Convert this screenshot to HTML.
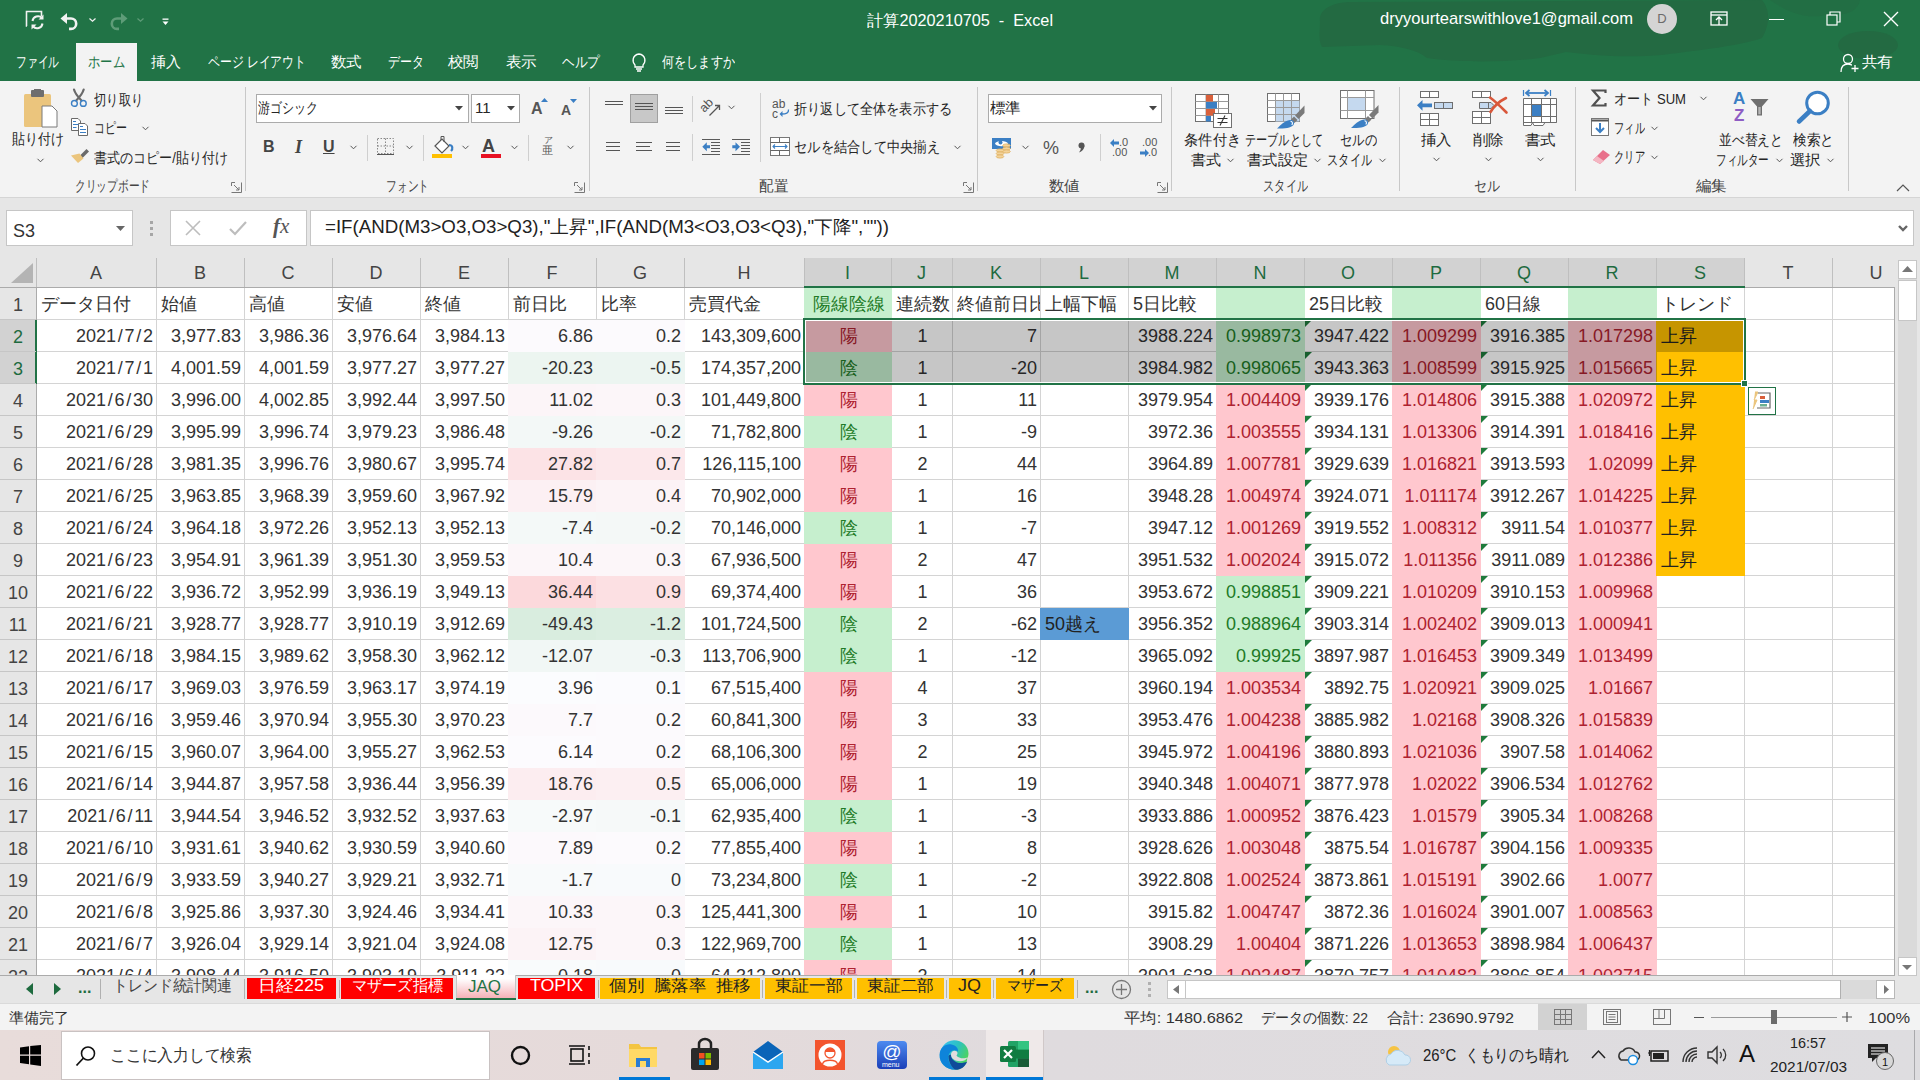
<!DOCTYPE html><html><head><meta charset="utf-8"><title>Excel</title><style>
*{box-sizing:border-box}
html,body{margin:0;padding:0}
body{width:1920px;height:1080px;overflow:hidden;position:relative;font-family:"Liberation Sans",sans-serif;background:#fff;color:#000}
.ab{position:absolute}
.t{position:absolute;white-space:nowrap;line-height:1}
.c{position:absolute;white-space:nowrap;overflow:hidden;font-size:18px;line-height:32px;height:31px;padding:0 3px 0 4px}
.sl{margin:0 1.75px}
.r{text-align:right}
.ce{text-align:center}
.gl{position:absolute;background:#D4D4D4}
svg{position:absolute;overflow:visible}
</style></head><body>

<div class="ab" style="left:0;top:0;width:1920px;height:81px;background:#217346;overflow:hidden">
<svg style="left:0;top:0" width="1920" height="81"><g fill="#236A42"><path d="M1320 22 C1318 8 1335 2 1352 2 L1762 0 C1772 12 1768 28 1762 38 C1740 46 1700 50 1662 55 C1625 58 1590 55 1566 52 L1540 58 C1500 63 1455 62 1427 58 C1418 50 1400 46 1380 45 L1322 47 C1318 40 1320 30 1320 22 Z"/><path d="M1770 0 L1860 0 C1858 12 1845 16 1830 14 C1810 20 1790 14 1770 0Z" opacity="0.6"/><ellipse cx="1868" cy="45" rx="30" ry="14"/></g></svg>
<svg style="left:25px;top:10px" width="22" height="20"><g fill="none" stroke="#F2F2F2" stroke-width="1.6"><path d="M2 16 H1.5 V1.5 H16.5 V6"/></g><g fill="none" stroke="#F2F2F2" stroke-width="2"><path d="M7.5 11 a5.5 5.5 0 0 1 9.5 -3"/><path d="M17.5 13.5 a5.5 5.5 0 0 1 -9.5 3"/></g><path d="M18.5 4.5 V9.5 H13.5Z M6.5 19.5 V14.5 H11.5Z" fill="#F2F2F2"/></svg>
<svg style="left:60px;top:12px" width="20" height="18"><g fill="none" stroke="#F2F2F2" stroke-width="2.6"><path d="M3 6.5 H11 a5.2 5.2 0 0 1 0 10.4 H9"/></g><path d="M0.5 6.5 L7 1 V12Z" fill="#F2F2F2"/></svg>
<svg style="left:89px;top:18px" width="7" height="4"><path d="M0.5 0.5 L3.5 3.3 L6.5 0.5" fill="none" stroke="#F2F2F2" stroke-width="1.2"/></svg>
<svg style="left:108px;top:12px" width="20" height="18"><g fill="none" stroke="#5E9C78" stroke-width="2.6"><path d="M17 6.5 H9 a5.2 5.2 0 0 0 0 10.4 H11"/></g><path d="M19.5 6.5 L13 1 V12Z" fill="#5E9C78"/></svg>
<svg style="left:137px;top:18px" width="7" height="4"><path d="M0.5 0.5 L3.5 3.3 L6.5 0.5" fill="none" stroke="#5E9C78" stroke-width="1.2"/></svg>
<svg style="left:162px;top:18px" width="7" height="8"><rect x="0.5" y="0.5" width="6" height="1.3" fill="#fff"/><path d="M0.5 3.5 H6.5 L3.5 7 Z" fill="#fff"/></svg>
<div class="t" id="f0" style="left:867px;top:13px;color:#fff;font-size:16px;transform:scaleX(1.0152);transform-origin:0 0;">計算2020210705&nbsp; -&nbsp; Excel</div>
<div class="t" id="f1" style="left:1380px;top:10px;color:#fff;font-size:17px;transform:scaleX(0.9728);transform-origin:0 0;">dryyourtearswithlove1@gmail.com</div>
<div class="ab" style="left:1647px;top:4px;width:30px;height:30px;border-radius:50%;background:#D4D4D4;color:#6b6b6b;font-size:13px;line-height:30px;text-align:center">D</div>
<svg style="left:1710px;top:11px" width="18" height="16"><g fill="none" stroke="#fff" stroke-width="1.3"><rect x="1" y="1" width="16" height="13"/><path d="M1 4 H17"/><path d="M9 14 V6 M6 9 L9 6 L12 9"/></g></svg>
<div class="ab" style="left:1769px;top:19px;width:15px;height:1px;background:#fff"></div>
<svg style="left:1826px;top:11px" width="16" height="16"><g fill="none" stroke="#fff" stroke-width="1.2"><rect x="1" y="4" width="10" height="10"/><path d="M4 4 V1 H14 V11 H11"/></g></svg>
<svg style="left:1883px;top:11px" width="16" height="16"><g stroke="#fff" stroke-width="1.4"><path d="M1 1 L15 15 M15 1 L1 15"/></g></svg>
<div class="ab" style="left:76px;top:43px;width:61px;height:38px;background:#F3F3F3"></div>
<div class="t" id="f2" style="left:16px;top:54px;color:#fff;font-size:15px;transform:scaleX(0.7167);transform-origin:0 0;">ファイル</div>
<div class="t" id="f3" style="left:88px;top:54px;color:#217346;font-size:15px;transform:scaleX(0.8222);transform-origin:0 0;">ホーム</div>
<div class="t" id="f4" style="left:151px;top:54px;color:#fff;font-size:15px;transform:scaleX(1.0000);transform-origin:0 0;">挿入</div>
<div class="t" id="f5" style="left:208px;top:54px;color:#fff;font-size:15px;transform:scaleX(0.7892);transform-origin:0 0;">ページ レイアウト</div>
<div class="t" id="f6" style="left:331px;top:54px;color:#fff;font-size:15px;transform:scaleX(1.0333);transform-origin:0 0;">数式</div>
<div class="t" id="f7" style="left:388px;top:54px;color:#fff;font-size:15px;transform:scaleX(0.8000);transform-origin:0 0;">データ</div>
<div class="t" id="f8" style="left:448px;top:54px;color:#fff;font-size:15px;transform:scaleX(1.0333);transform-origin:0 0;">校閲</div>
<div class="t" id="f9" style="left:506px;top:54px;color:#fff;font-size:15px;transform:scaleX(1.0333);transform-origin:0 0;">表示</div>
<div class="t" id="f10" style="left:562px;top:54px;color:#fff;font-size:15px;transform:scaleX(0.8444);transform-origin:0 0;">ヘルプ</div>
<div class="t" id="f11" style="left:662px;top:54px;color:#fff;font-size:15px;transform:scaleX(0.8111);transform-origin:0 0;">何をしますか</div>
<svg style="left:631px;top:52px" width="16" height="20"><g fill="none" stroke="#fff" stroke-width="1.3"><path d="M4 13 C1 10 1 3 8 2 C15 3 15 10 12 13 V15 H4 Z"/><path d="M5 17 H11 M6 19 H10"/></g></svg>
<svg style="left:1840px;top:53px" width="20" height="20"><g fill="none" stroke="#fff" stroke-width="1.3"><circle cx="8" cy="6" r="4.5"/><path d="M1 19 C1 13 4 11 8 11 C10 11 11 12 12 12"/><path d="M15 12 V19 M11.5 15.5 H18.5"/></g></svg>
<div class="t" id="f12" style="left:1862px;top:54px;color:#fff;font-size:15px;transform:scaleX(1.0333);transform-origin:0 0;">共有</div>
</div>
<div class="ab" style="left:0;top:81px;width:1920px;height:117px;background:#F3F3F3;border-bottom:1px solid #D5D5D5"></div>
<div class="ab" style="left:245px;top:87px;width:1px;height:104px;background:#C8C8C8"></div>
<div class="ab" style="left:589px;top:87px;width:1px;height:104px;background:#C8C8C8"></div>
<div class="ab" style="left:977px;top:87px;width:1px;height:104px;background:#C8C8C8"></div>
<div class="ab" style="left:1171px;top:87px;width:1px;height:104px;background:#C8C8C8"></div>
<div class="ab" style="left:1399px;top:87px;width:1px;height:104px;background:#C8C8C8"></div>
<div class="ab" style="left:1575px;top:87px;width:1px;height:104px;background:#C8C8C8"></div>
<div class="ab" style="left:1848px;top:87px;width:1px;height:104px;background:#C8C8C8"></div>
<div class="t" id="f13" style="left:75px;top:178px;color:#444;font-size:15px;transform:scaleX(0.7143);transform-origin:0 0;">クリップボード</div>
<div class="t" id="f14" style="left:386px;top:178px;color:#444;font-size:15px;transform:scaleX(0.7167);transform-origin:0 0;">フォント</div>
<div class="t" id="f15" style="left:759px;top:178px;color:#444;font-size:15px;transform:scaleX(0.9667);transform-origin:0 0;">配置</div>
<div class="t" id="f16" style="left:1049px;top:178px;color:#444;font-size:15px;transform:scaleX(1.0333);transform-origin:0 0;">数値</div>
<div class="t" id="f17" style="left:1263px;top:178px;color:#444;font-size:15px;transform:scaleX(0.7500);transform-origin:0 0;">スタイル</div>
<div class="t" id="f18" style="left:1474px;top:178px;color:#444;font-size:15px;transform:scaleX(0.8667);transform-origin:0 0;">セル</div>
<div class="t" id="f19" style="left:1696px;top:178px;color:#444;font-size:15px;transform:scaleX(1.0333);transform-origin:0 0;">編集</div>
<svg style="left:231px;top:182px" width="11" height="11"><g fill="none" stroke="#777" stroke-width="1"><path d="M0.5 4 V0.5 H4"/><path d="M0.5 10.5 H10.5 V0.5"/><path d="M3 3 L8 8 M5 8 H8 V5"/></g></svg>
<svg style="left:574px;top:182px" width="11" height="11"><g fill="none" stroke="#777" stroke-width="1"><path d="M0.5 4 V0.5 H4"/><path d="M0.5 10.5 H10.5 V0.5"/><path d="M3 3 L8 8 M5 8 H8 V5"/></g></svg>
<svg style="left:963px;top:182px" width="11" height="11"><g fill="none" stroke="#777" stroke-width="1"><path d="M0.5 4 V0.5 H4"/><path d="M0.5 10.5 H10.5 V0.5"/><path d="M3 3 L8 8 M5 8 H8 V5"/></g></svg>
<svg style="left:1157px;top:182px" width="11" height="11"><g fill="none" stroke="#777" stroke-width="1"><path d="M0.5 4 V0.5 H4"/><path d="M0.5 10.5 H10.5 V0.5"/><path d="M3 3 L8 8 M5 8 H8 V5"/></g></svg>
<svg style="left:1896px;top:184px" width="14" height="8"><path d="M1 7 L7 1 L13 7" fill="none" stroke="#555" stroke-width="1.2"/></svg>

<svg style="left:23px;top:89px" width="36" height="40"><rect x="1" y="5" width="27" height="33" rx="1.5" fill="#EBC57D"/><rect x="8" y="1" width="13" height="7" rx="1" fill="#6E6E6E"/><rect x="11" y="0" width="7" height="3" fill="#6E6E6E"/><path d="M19 17 H29 L34 22 V38 H19 Z" fill="#fff" stroke="#7A7A7A" stroke-width="1"/></svg>
<div class="t" id="f20" style="left:12px;top:131px;color:#262626;font-size:15px;transform:scaleX(0.8667);transform-origin:0 0;">貼り付け</div>
<svg style="left:36.5px;top:158px" width="7" height="5"><path d="M0.5 0.8 L3.5 3.8 L6.5 0.8" fill="none" stroke="#555" stroke-width="1"/></svg>
<svg style="left:70px;top:88px" width="20" height="20"><g fill="none" stroke="#6A6A6A" stroke-width="2.2" stroke-linecap="round"><path d="M4 1.5 C5 5 7 8 11.5 12.5"/><path d="M13.7 1.5 C12.7 5 10.7 8 6.2 12.5"/></g><g fill="none" stroke="#3B7FC4" stroke-width="1.4"><circle cx="4.4" cy="15.4" r="2.9"/><circle cx="13.3" cy="15.4" r="2.9"/></g></svg>
<div class="t" id="f21" style="left:94px;top:92px;color:#262626;font-size:15px;transform:scaleX(0.8167);transform-origin:0 0;">切り取り</div>
<svg style="left:70px;top:117px" width="20" height="20"><g fill="#fff" stroke="#6A6A6A" stroke-width="1"><path d="M1.5 1.5 H8 L10.5 4 V13.5 H1.5 Z"/><path d="M8.5 6.5 H15 L17.5 9 V18.5 H8.5 Z"/></g><g stroke="#3B7FC4" stroke-width="1"><path d="M3 4.5 H6 M3 7.5 H8.5 M3 10.5 H6.5 M10 9.5 H13 M10 12.5 H16 M10 15.5 H16"/></g></svg>
<div class="t" id="f22" style="left:94px;top:120px;color:#262626;font-size:15px;transform:scaleX(0.7333);transform-origin:0 0;">コピー</div>
<svg style="left:141.5px;top:126px" width="7" height="5"><path d="M0.5 0.8 L3.5 3.8 L6.5 0.8" fill="none" stroke="#555" stroke-width="1"/></svg>
<svg style="left:70px;top:148px" width="20" height="18"><path d="M16.5 1 L19 3.5 L11.5 11 L9 8.5 Z" fill="#6A6A6A"/><path d="M1 7.5 L9.5 5.5 L13.5 10.5 L8 15 Z" fill="#EBC57D"/></svg>
<div class="t" id="f23" style="left:94px;top:150px;color:#262626;font-size:15px;transform:scaleX(0.8692);transform-origin:0 0;">書式のコピー/貼り付け</div>
<div class="ab" style="left:256px;top:94px;width:213px;height:29px;background:#fff;border:1px solid #ABABAB"></div>
<div class="t" id="f24" style="left:258px;top:100px;color:#262626;font-size:15px;transform:scaleX(0.8000);transform-origin:0 0;">游ゴシック</div>
<svg style="left:455px;top:106px" width="8" height="5"><path d="M0 0 H8 L4 4.5Z" fill="#444"/></svg>
<div class="ab" style="left:471px;top:94px;width:49px;height:29px;background:#fff;border:1px solid #ABABAB"></div>
<div class="t" style="left:475px;top:100px;color:#262626;font-size:15px;">11</div>
<svg style="left:507px;top:106px" width="8" height="5"><path d="M0 0 H8 L4 4.5Z" fill="#444"/></svg>
<div class="t" style="left:531px;top:101px;color:#555;font-size:16px;"><b>A</b></div>
<svg style="left:541px;top:98px" width="7" height="4"><path d="M0 4 L3.5 0 L7 4Z" fill="#3B7FC4"/></svg>
<div class="t" style="left:561px;top:103px;color:#555;font-size:14px;"><b>A</b></div>
<svg style="left:570px;top:99px" width="7" height="4"><path d="M0 0 L3.5 4 L7 0Z" fill="#3B7FC4"/></svg>
<div class="t" style="left:263px;top:139px;color:#444;font-size:16px;"><b>B</b></div>
<div class="t" style="left:295px;top:138px;color:#444;font-size:18px;font-family:'Liberation Serif'"><i><b>I</b></i></div>
<div class="t" style="left:323px;top:139px;color:#444;font-size:16px;"><b><u>U</u></b></div>
<svg style="left:349.5px;top:145px" width="7" height="5"><path d="M0.5 0.8 L3.5 3.8 L6.5 0.8" fill="none" stroke="#555" stroke-width="1"/></svg>
<div class="ab" style="left:367px;top:135px;width:1px;height:26px;background:#CFCFCF"></div>
<div class="ab" style="left:423px;top:135px;width:1px;height:26px;background:#CFCFCF"></div>
<div class="ab" style="left:528px;top:135px;width:1px;height:26px;background:#CFCFCF"></div>
<svg style="left:377px;top:138px" width="17" height="17"><g fill="none" stroke="#888" stroke-width="1" stroke-dasharray="1.5 1.5"><rect x="0.5" y="0.5" width="16" height="15"/><path d="M8.5 0.5 V15.5 M0.5 8 H16.5"/></g><path d="M0 16.5 H17" stroke="#555" stroke-width="1"/></svg>
<svg style="left:405.5px;top:145px" width="7" height="5"><path d="M0.5 0.8 L3.5 3.8 L6.5 0.8" fill="none" stroke="#555" stroke-width="1"/></svg>
<svg style="left:432px;top:136px" width="22" height="22"><path d="M3 10 L10 3 L17 10 L10 17 Z" fill="#fff" stroke="#555" stroke-width="1.2"/><path d="M9 4 V0.5 H12 V6" fill="none" stroke="#555" stroke-width="1"/><path d="M17 9 C21 9 21 13 19 15" fill="none" stroke="#3B7FC4" stroke-width="2.2"/><rect x="0" y="18" width="20" height="4" fill="#FFC000"/></svg>
<svg style="left:461.5px;top:145px" width="7" height="5"><path d="M0.5 0.8 L3.5 3.8 L6.5 0.8" fill="none" stroke="#555" stroke-width="1"/></svg>
<div class="t" style="left:482px;top:137px;color:#444;font-size:18px;"><b>A</b></div>
<div class="ab" style="left:481px;top:154px;width:20px;height:4px;background:#E81123"></div>
<svg style="left:510.5px;top:145px" width="7" height="5"><path d="M0.5 0.8 L3.5 3.8 L6.5 0.8" fill="none" stroke="#555" stroke-width="1"/></svg>
<div class="t" style="left:542px;top:145px;color:#555;font-size:11px;">亜</div>
<div class="t" style="left:544px;top:136px;color:#555;font-size:9px;">ア</div>
<svg style="left:566.5px;top:145px" width="7" height="5"><path d="M0.5 0.8 L3.5 3.8 L6.5 0.8" fill="none" stroke="#555" stroke-width="1"/></svg>
<div class="ab" style="left:605px;top:101px;width:18px;height:1px;background:#555"></div>
<div class="ab" style="left:605px;top:104px;width:18px;height:1px;background:#555"></div>
<div class="ab" style="left:630px;top:94px;width:28px;height:29px;background:#C8C8C8;border:1px solid #A0A0A0"></div>
<div class="ab" style="left:635px;top:103px;width:18px;height:1px;background:#555"></div>
<div class="ab" style="left:635px;top:106px;width:18px;height:1px;background:#555"></div>
<div class="ab" style="left:635px;top:109px;width:18px;height:1px;background:#555"></div>
<div class="ab" style="left:665px;top:107px;width:18px;height:1px;background:#555"></div>
<div class="ab" style="left:665px;top:110px;width:18px;height:1px;background:#555"></div>
<div class="ab" style="left:665px;top:113px;width:18px;height:1px;background:#555"></div>
<div class="ab" style="left:606px;top:142px;width:14px;height:1px;background:#555"></div>
<div class="ab" style="left:606px;top:146px;width:14px;height:1px;background:#555"></div>
<div class="ab" style="left:606px;top:150px;width:14px;height:1px;background:#555"></div>
<div class="ab" style="left:636px;top:142px;width:16px;height:1px;background:#555"></div>
<div class="ab" style="left:636px;top:146px;width:14px;height:1px;background:#555"></div>
<div class="ab" style="left:636px;top:150px;width:16px;height:1px;background:#555"></div>
<div class="ab" style="left:666px;top:142px;width:14px;height:1px;background:#555"></div>
<div class="ab" style="left:666px;top:146px;width:14px;height:1px;background:#555"></div>
<div class="ab" style="left:666px;top:150px;width:14px;height:1px;background:#555"></div>
<div class="ab" style="left:692px;top:96px;width:1px;height:26px;background:#CFCFCF"></div>
<div class="ab" style="left:692px;top:134px;width:1px;height:27px;background:#CFCFCF"></div>
<div class="ab" style="left:760px;top:93px;width:1px;height:69px;background:#CFCFCF"></div>
<svg style="left:699px;top:97px" width="24" height="22"><text x="8" y="12" font-size="12.5" fill="#555" font-family="Liberation Sans" text-anchor="middle" transform="rotate(-45 8 9)">ab</text><path d="M10.5 18.5 L20.5 8.5 M16 8.5 H20.5 V13" fill="none" stroke="#555" stroke-width="1.3"/></svg>
<svg style="left:727.5px;top:105px" width="7" height="5"><path d="M0.5 0.8 L3.5 3.8 L6.5 0.8" fill="none" stroke="#555" stroke-width="1"/></svg>
<svg style="left:702px;top:138px" width="19" height="18"><g stroke="#5A5A5A" stroke-width="1"><path d="M0 1.5 H18 M9 4.5 H18 M9 7.5 H18 M9 10.5 H18 M9 13.5 H18 M0 16.5 H18"/></g><path d="M0.3 8.7 L4.8 4.2 V7.2 H8 V10.2 H4.8 V13.2Z" fill="#3B7FC4"/></svg>
<svg style="left:732px;top:138px" width="19" height="18"><g stroke="#5A5A5A" stroke-width="1"><path d="M0 1.5 H18 M9 4.5 H18 M9 7.5 H18 M9 10.5 H18 M9 13.5 H18 M0 16.5 H18"/></g><path d="M8 8.7 L3.5 4.2 V7.2 H0.3 V10.2 H3.5 V13.2Z" fill="#3B7FC4"/></svg>
<div class="t" style="left:772px;top:98px;color:#555;font-size:12px;">ab</div>
<div class="t" style="left:772px;top:108px;color:#555;font-size:12px;">c</div>
<svg style="left:779px;top:109px" width="11" height="8"><path d="M9.5 0.5 C10 4 7 5 2.5 5" fill="none" stroke="#3B7FC4" stroke-width="1.3"/><path d="M0.5 5 L3.5 2 V8Z" fill="#3B7FC4"/></svg>
<div class="t" id="f25" style="left:794px;top:101px;color:#262626;font-size:15px;transform:scaleX(0.8778);transform-origin:0 0;">折り返して全体を表示する</div>
<svg style="left:770px;top:137px" width="20" height="19"><g fill="#fff" stroke="#777" stroke-width="1"><rect x="0.5" y="0.5" width="19" height="18"/></g><path d="M0.5 5.5 H19.5 M0.5 13.5 H19.5 M9.5 0.5 V5.5 M9.5 13.5 V18.5" stroke="#666" stroke-width="1"/><path d="M3 9.5 H17 M5 7.5 L3 9.5 L5 11.5 M15 7.5 L17 9.5 L15 11.5" fill="none" stroke="#3B7FC4" stroke-width="1.1"/></svg>
<div class="t" id="f26" style="left:794px;top:139px;color:#262626;font-size:15px;transform:scaleX(0.8848);transform-origin:0 0;">セルを結合して中央揃え</div>
<svg style="left:953.5px;top:145px" width="7" height="5"><path d="M0.5 0.8 L3.5 3.8 L6.5 0.8" fill="none" stroke="#555" stroke-width="1"/></svg>
<div class="ab" style="left:988px;top:94px;width:174px;height:29px;background:#fff;border:1px solid #ABABAB"></div>
<div class="t" id="f27" style="left:990px;top:100px;color:#262626;font-size:15px;transform:scaleX(1.0333);transform-origin:0 0;">標準</div>
<svg style="left:1149px;top:106px" width="8" height="5"><path d="M0 0 H8 L4 4.5Z" fill="#444"/></svg>
<svg style="left:991px;top:137px" width="22" height="22"><rect x="1" y="1" width="19" height="11" fill="#3B7FC4"/><path d="M4 6.5 C5 3 16 3 17 6.5 C16 10 5 10 4 6.5Z" fill="#fff"/><circle cx="9.5" cy="5.5" r="2" fill="#3B7FC4"/><g fill="#F3D39A" stroke="#E0B060" stroke-width="0.8"><ellipse cx="15.5" cy="8.5" rx="3.8" ry="1.6"/><ellipse cx="15.5" cy="11.5" rx="3.8" ry="1.6"/><ellipse cx="15.5" cy="14.5" rx="3.8" ry="1.6"/><ellipse cx="9" cy="13.5" rx="3.8" ry="1.6"/><ellipse cx="9" cy="16.5" rx="3.8" ry="1.6"/><ellipse cx="9" cy="19.5" rx="3.8" ry="1.6"/></g></svg>
<svg style="left:1021.5px;top:145px" width="7" height="5"><path d="M0.5 0.8 L3.5 3.8 L6.5 0.8" fill="none" stroke="#555" stroke-width="1"/></svg>
<div class="t" style="left:1043px;top:139px;color:#555;font-size:18px;">%</div>
<svg style="left:1077px;top:142px" width="8" height="11"><circle cx="4.5" cy="3.5" r="3" fill="#555"/><path d="M7.4 3.5 C7.5 7 5 9.5 2 10.5 C3.5 8.5 4 7 4 5Z" fill="#555"/></svg>
<div class="ab" style="left:1100px;top:134px;width:1px;height:27px;background:#CFCFCF"></div>
<svg style="left:1110px;top:139px" width="9" height="8"><path d="M0 4 L4 0 V2.6 H9 V5.4 H4 V8 Z" fill="#3B7FC4"/></svg>
<div class="t" style="left:1119px;top:137px;color:#555;font-size:11px;">.0</div>
<div class="t" style="left:1112px;top:147px;color:#555;font-size:11px;">.00</div>
<div class="t" style="left:1142px;top:137px;color:#555;font-size:11px;">.00</div>
<svg style="left:1140px;top:149px" width="9" height="8"><path d="M9 4 L5 0 V2.6 H0 V5.4 H5 V8 Z" fill="#3B7FC4"/></svg>
<div class="t" style="left:1148px;top:147px;color:#555;font-size:11px;">.0</div>
<svg style="left:1194px;top:93px" width="40" height="36"><rect x="1.5" y="1.5" width="33" height="27" fill="#fff" stroke="#707070"/><g stroke="#9A9A9A" stroke-width="1"><path d="M1.5 8.5 H34.5 M1.5 15.5 H34.5 M1.5 22.5 H34.5 M12 1.5 V28.5 M24.5 1.5 V28.5"/></g><rect x="12" y="2" width="7" height="6.5" fill="#D9603B"/><rect x="12" y="9" width="11" height="6.5" fill="#3B7FC4"/><rect x="12" y="16" width="9" height="6.5" fill="#D9603B"/><rect x="12" y="23" width="5" height="5.5" fill="#3B7FC4"/><rect x="19.5" y="20.5" width="18" height="14" fill="#fff" stroke="#707070"/><path d="M23.5 25.5 H33.5 M23.5 29.5 H33.5 M31 22.5 L26 32.5" stroke="#333" stroke-width="1.1"/></svg>
<div class="t" id="f28" style="left:1184px;top:132px;color:#262626;font-size:15px;transform:scaleX(0.9500);transform-origin:0 0;">条件付き</div>
<div class="t" id="f29" style="left:1191px;top:152px;color:#262626;font-size:15px;transform:scaleX(1.0000);transform-origin:0 0;">書式</div>
<svg style="left:1226.5px;top:158px" width="7" height="5"><path d="M0.5 0.8 L3.5 3.8 L6.5 0.8" fill="none" stroke="#555" stroke-width="1"/></svg>
<svg style="left:1266px;top:92px" width="42" height="40"><rect x="1.5" y="1.5" width="32" height="28" fill="#fff" stroke="#707070"/><rect x="9.5" y="8.5" width="24" height="21" fill="#C5D9EF"/><g stroke="#9A9A9A" stroke-width="1"><path d="M1.5 8.5 H33.5 M1.5 15.5 H33.5 M1.5 22.5 H33.5 M9.5 1.5 V29.5 M17.5 1.5 V29.5 M25.5 1.5 V29.5"/></g><path d="M38.5 13.5 V21 L32.5 27 L29 23.5 Z" fill="#7A7A7A"/><path d="M28 24.5 L31.5 28 L28.5 31 L25 27.5 Z" fill="#7A7A7A"/><path d="M24 28 C27.5 27.5 29 30.5 27.5 33 C25 36 19 36.5 11 36.5 C15 33 18 29 24 28 Z" fill="#3B7FC4"/><path d="M24.5 29.2 C26.5 29.5 27 31.5 25.8 33" fill="none" stroke="#fff" stroke-width="1.1"/></svg>
<div class="t" id="f30" style="left:1245px;top:132px;color:#262626;font-size:15px;transform:scaleX(0.7429);transform-origin:0 0;">テーブルとして</div>
<div class="t" id="f31" style="left:1247px;top:152px;color:#262626;font-size:15px;transform:scaleX(1.0167);transform-origin:0 0;">書式設定</div>
<svg style="left:1313.5px;top:158px" width="7" height="5"><path d="M0.5 0.8 L3.5 3.8 L6.5 0.8" fill="none" stroke="#555" stroke-width="1"/></svg>
<svg style="left:1339px;top:89px" width="42" height="42"><rect x="1.5" y="1.5" width="33.5" height="28" fill="#fff" stroke="#707070"/><rect x="8.5" y="8.5" width="18" height="13" fill="#C5D9EF"/><g stroke="#9A9A9A" stroke-width="1"><path d="M1.5 8.5 H35 M1.5 21.5 H35 M8.5 1.5 V29.5 M26.5 1.5 V29.5"/></g><g transform="translate(1 2.5)"><path d="M38.5 13.5 V21 L32.5 27 L29 23.5 Z" fill="#7A7A7A"/><path d="M28 24.5 L31.5 28 L28.5 31 L25 27.5 Z" fill="#7A7A7A"/><path d="M24 28 C27.5 27.5 29 30.5 27.5 33 C25 36 19 36.5 11 36.5 C15 33 18 29 24 28 Z" fill="#3B7FC4"/><path d="M24.5 29.2 C26.5 29.5 27 31.5 25.8 33" fill="none" stroke="#fff" stroke-width="1.1"/></g></svg>
<div class="t" id="f32" style="left:1340px;top:132px;color:#262626;font-size:15px;transform:scaleX(0.8222);transform-origin:0 0;">セルの</div>
<div class="t" id="f33" style="left:1327px;top:152px;color:#262626;font-size:15px;transform:scaleX(0.7500);transform-origin:0 0;">スタイル</div>
<svg style="left:1378.5px;top:158px" width="7" height="5"><path d="M0.5 0.8 L3.5 3.8 L6.5 0.8" fill="none" stroke="#555" stroke-width="1"/></svg>
<svg style="left:1415px;top:89px" width="40" height="40"><g fill="#fff" stroke="#6E6E6E" stroke-width="1"><rect x="5.5" y="2.5" width="18" height="6"/><path d="M14.5 2.5 V8.5"/><rect x="19.5" y="13.5" width="18" height="6" fill="#C5D9EF"/><path d="M28.5 13.5 V19.5"/><rect x="5.5" y="24.5" width="18" height="12"/><path d="M14.5 24.5 V36.5 M5.5 30.5 H23.5"/></g><path d="M2 16.3 L7.5 11 V14.5 H17 V18.2 H7.5 V21.7Z" fill="#3B7FC4"/></svg>
<div class="t" id="f34" style="left:1421px;top:132px;color:#262626;font-size:15px;transform:scaleX(1.0333);transform-origin:0 0;">挿入</div>
<svg style="left:1432.5px;top:157px" width="7" height="5"><path d="M0.5 0.8 L3.5 3.8 L6.5 0.8" fill="none" stroke="#555" stroke-width="1"/></svg>
<svg style="left:1470px;top:89px" width="40" height="40"><g fill="#fff" stroke="#6E6E6E" stroke-width="1"><rect x="2.5" y="2.5" width="18" height="6"/><path d="M11.5 2.5 V8.5"/><path d="M9.5 13.5 H21 L24 16.5 L21 19.5 H9.5Z" fill="#C5D9EF"/><path d="M18.5 13.5 V19.5"/><rect x="2.5" y="22.5" width="18" height="12"/><path d="M11.5 22.5 V34.5 M2.5 28.5 H20.5"/></g><path d="M20 8.5 C25 12 32 19 36.5 23.5 M36 9 C30 12 24 17 20.5 23" fill="none" stroke="#D9573A" stroke-width="2.6" stroke-linecap="round"/></svg>
<div class="t" id="f35" style="left:1473px;top:132px;color:#262626;font-size:15px;transform:scaleX(1.0333);transform-origin:0 0;">削除</div>
<svg style="left:1484.5px;top:157px" width="7" height="5"><path d="M0.5 0.8 L3.5 3.8 L6.5 0.8" fill="none" stroke="#555" stroke-width="1"/></svg>
<svg style="left:1521px;top:89px" width="40" height="40"><path d="M2.5 1 V7 M29.5 1 V7" stroke="#3B7FC4" stroke-width="1.2"/><path d="M5 4 H27" stroke="#3B7FC4" stroke-width="1.8"/><path d="M8.5 1 L5 4 L8.5 7 M23.5 1 L27 4 L23.5 7" fill="none" stroke="#3B7FC4" stroke-width="1.8"/><g fill="#fff" stroke="#6E6E6E" stroke-width="1"><path d="M2.5 9.5 H35.5 V33.5 H24 L22 36.5 H13 L11.5 33.5 L10 36.5 H2.5Z"/></g><g stroke="#6E6E6E" stroke-width="1"><path d="M2.5 15.5 H35.5 M2.5 27.5 H35.5 M2.5 33.5 H35.5 M10.5 9.5 V33.5 M20.5 9.5 V33.5 M29.5 9.5 V33.5"/></g><rect x="11" y="16" width="9" height="11" fill="#3B7FC4"/></svg>
<div class="t" id="f36" style="left:1525px;top:132px;color:#262626;font-size:15px;transform:scaleX(1.0333);transform-origin:0 0;">書式</div>
<svg style="left:1536.5px;top:157px" width="7" height="5"><path d="M0.5 0.8 L3.5 3.8 L6.5 0.8" fill="none" stroke="#555" stroke-width="1"/></svg>
<svg style="left:1591px;top:89px" width="18" height="18"><path d="M14.5 4 V1.5 H2 L8.5 9 L2 16.5 H14.5 V14" fill="none" stroke="#505050" stroke-width="2.2" stroke-linejoin="miter"/></svg>
<div class="t" id="f37" style="left:1614px;top:91px;color:#262626;font-size:15px;transform:scaleX(0.8727);transform-origin:0 0;">オート SUM</div>
<svg style="left:1699.5px;top:96px" width="7" height="5"><path d="M0.5 0.8 L3.5 3.8 L6.5 0.8" fill="none" stroke="#555" stroke-width="1"/></svg>
<svg style="left:1591px;top:118px" width="18" height="18"><rect x="0.5" y="0.5" width="17" height="17" fill="#fff" stroke="#777"/><path d="M0.5 2.5 H17.5" stroke="#555" stroke-width="2"/><path d="M9 5 V14 M5 10 L9 14 L13 10" fill="none" stroke="#3B7FC4" stroke-width="2"/></svg>
<div class="t" id="f38" style="left:1614px;top:120px;color:#262626;font-size:15px;transform:scaleX(0.6889);transform-origin:0 0;">フィル</div>
<svg style="left:1650.5px;top:126px" width="7" height="5"><path d="M0.5 0.8 L3.5 3.8 L6.5 0.8" fill="none" stroke="#555" stroke-width="1"/></svg>
<svg style="left:1592px;top:147px" width="20" height="18"><path d="M1 13 L11 3 L18 8 L8 17 Z" fill="#E8708A"/><path d="M1 13 L5 9 L12 14 L8 17Z" fill="#F4B6C2"/></svg>
<div class="t" id="f39" style="left:1614px;top:149px;color:#262626;font-size:15px;transform:scaleX(0.6889);transform-origin:0 0;">クリア</div>
<svg style="left:1650.5px;top:155px" width="7" height="5"><path d="M0.5 0.8 L3.5 3.8 L6.5 0.8" fill="none" stroke="#555" stroke-width="1"/></svg>
<div class="t" style="left:1733px;top:90px;color:#3B7FC4;font-size:17px;"><b>A</b></div>
<div class="t" style="left:1734px;top:107px;color:#8E5DC4;font-size:17px;"><b>Z</b></div>
<svg style="left:1750px;top:98px" width="20" height="20"><path d="M0.5 1 H18.5 L12 8.5 V17.5 H7 V8.5 Z" fill="#6E6E6E"/><path d="M8.3 9 V16.3 H10.7 V9" fill="#fff" opacity="0.5"/></svg>
<div class="t" id="f40" style="left:1719px;top:132px;color:#262626;font-size:15px;transform:scaleX(0.8533);transform-origin:0 0;">並べ替えと</div>
<div class="t" id="f41" style="left:1716px;top:152px;color:#262626;font-size:15px;transform:scaleX(0.7067);transform-origin:0 0;">フィルター</div>
<svg style="left:1775.5px;top:158px" width="7" height="5"><path d="M0.5 0.8 L3.5 3.8 L6.5 0.8" fill="none" stroke="#555" stroke-width="1"/></svg>
<svg style="left:1795px;top:89px" width="40" height="40"><circle cx="22.5" cy="14" r="10.8" fill="#fff" stroke="#3B7FC4" stroke-width="3"/><path d="M15 22 L4 32.5" stroke="#3B7FC4" stroke-width="4.5" stroke-linecap="round"/></svg>
<div class="t" id="f42" style="left:1793px;top:132px;color:#262626;font-size:15px;transform:scaleX(0.9111);transform-origin:0 0;">検索と</div>
<div class="t" id="f43" style="left:1790px;top:152px;color:#262626;font-size:15px;transform:scaleX(1.0333);transform-origin:0 0;">選択</div>
<svg style="left:1826.5px;top:158px" width="7" height="5"><path d="M0.5 0.8 L3.5 3.8 L6.5 0.8" fill="none" stroke="#555" stroke-width="1"/></svg>
<div class="ab" style="left:0;top:198px;width:1920px;height:60px;background:#E6E6E6"></div>
<div class="ab" style="left:6px;top:210px;width:127px;height:36px;background:#fff;border:1px solid #C6C6C6"></div>
<div class="t" style="left:13px;top:222px;color:#333;font-size:18px;">S3</div>
<svg style="left:116px;top:226px" width="9" height="5"><path d="M0 0 H9 L4.5 5Z" fill="#666"/></svg>
<div class="ab" style="left:150px;top:221px;width:3px;height:3px;background:#A6A6A6"></div>
<div class="ab" style="left:150px;top:227px;width:3px;height:3px;background:#A6A6A6"></div>
<div class="ab" style="left:150px;top:233px;width:3px;height:3px;background:#A6A6A6"></div>
<div class="ab" style="left:170px;top:210px;width:137px;height:36px;background:#fff;border:1px solid #C6C6C6"></div>
<svg style="left:185px;top:220px" width="16" height="16"><path d="M1 1 L15 15 M15 1 L1 15" stroke="#BDBDBD" stroke-width="1.6"/></svg>
<svg style="left:229px;top:221px" width="18" height="15"><path d="M1 8 L6 13 L17 1" fill="none" stroke="#BDBDBD" stroke-width="2.2"/></svg>
<div class="t" style="left:273px;top:216px;color:#555;font-size:21px;font-family:'Liberation Serif'"><i><b>f</b>x</i></div>
<div class="ab" style="left:310px;top:210px;width:1604px;height:36px;background:#fff;border:1px solid #C6C6C6"></div>
<div class="t" id="f44" style="left:325px;top:218px;color:#222;font-size:18px;transform:scaleX(1.0388);transform-origin:0 0;">=IF(AND(M3&gt;O3,O3&gt;Q3),"上昇",IF(AND(M3&lt;O3,O3&lt;Q3),"下降",""))</div>
<svg style="left:1898px;top:225px" width="10" height="7"><path d="M1 1 L5 5 L9 1" fill="none" stroke="#666" stroke-width="2.4"/></svg>
<div class="ab" style="left:0;top:258px;width:1920px;height:29px;background:#E6E6E6"></div>
<div class="ab" style="left:804px;top:258px;width:940px;height:29px;background:#D2D2D2"></div>
<svg style="left:4px;top:262px" width="30" height="22"><path d="M29 1 V21 H7 Z" fill="#B4B4B4"/></svg>
<div class="ab" style="left:36px;top:258px;width:1px;height:29px;background:#BFBFBF"></div>
<div class="ab" style="left:156px;top:258px;width:1px;height:29px;background:#BFBFBF"></div>
<div class="ab" style="left:244px;top:258px;width:1px;height:29px;background:#BFBFBF"></div>
<div class="ab" style="left:332px;top:258px;width:1px;height:29px;background:#BFBFBF"></div>
<div class="ab" style="left:420px;top:258px;width:1px;height:29px;background:#BFBFBF"></div>
<div class="ab" style="left:508px;top:258px;width:1px;height:29px;background:#BFBFBF"></div>
<div class="ab" style="left:596px;top:258px;width:1px;height:29px;background:#BFBFBF"></div>
<div class="ab" style="left:684px;top:258px;width:1px;height:29px;background:#BFBFBF"></div>
<div class="ab" style="left:804px;top:258px;width:1px;height:29px;background:#BFBFBF"></div>
<div class="ab" style="left:891px;top:258px;width:1px;height:29px;background:#BFBFBF"></div>
<div class="ab" style="left:952px;top:258px;width:1px;height:29px;background:#BFBFBF"></div>
<div class="ab" style="left:1040px;top:258px;width:1px;height:29px;background:#BFBFBF"></div>
<div class="ab" style="left:1128px;top:258px;width:1px;height:29px;background:#BFBFBF"></div>
<div class="ab" style="left:1216px;top:258px;width:1px;height:29px;background:#BFBFBF"></div>
<div class="ab" style="left:1304px;top:258px;width:1px;height:29px;background:#BFBFBF"></div>
<div class="ab" style="left:1392px;top:258px;width:1px;height:29px;background:#BFBFBF"></div>
<div class="ab" style="left:1480px;top:258px;width:1px;height:29px;background:#BFBFBF"></div>
<div class="ab" style="left:1568px;top:258px;width:1px;height:29px;background:#BFBFBF"></div>
<div class="ab" style="left:1656px;top:258px;width:1px;height:29px;background:#BFBFBF"></div>
<div class="ab" style="left:1744px;top:258px;width:1px;height:29px;background:#BFBFBF"></div>
<div class="ab" style="left:1832px;top:258px;width:1px;height:29px;background:#BFBFBF"></div>
<div class="ab" style="left:0;top:287px;width:1894px;height:1px;background:#ABABAB"></div>
<div class="ab" style="left:804px;top:286px;width:941px;height:2px;background:#217346"></div>
<div class="t" style="left:56.0px;width:80px;text-align:center;top:264px;font-size:18px;color:#444">A</div>
<div class="t" style="left:160.0px;width:80px;text-align:center;top:264px;font-size:18px;color:#444">B</div>
<div class="t" style="left:248.0px;width:80px;text-align:center;top:264px;font-size:18px;color:#444">C</div>
<div class="t" style="left:336.0px;width:80px;text-align:center;top:264px;font-size:18px;color:#444">D</div>
<div class="t" style="left:424.0px;width:80px;text-align:center;top:264px;font-size:18px;color:#444">E</div>
<div class="t" style="left:512.0px;width:80px;text-align:center;top:264px;font-size:18px;color:#444">F</div>
<div class="t" style="left:600.0px;width:80px;text-align:center;top:264px;font-size:18px;color:#444">G</div>
<div class="t" style="left:704.0px;width:80px;text-align:center;top:264px;font-size:18px;color:#444">H</div>
<div class="t" style="left:807.5px;width:80px;text-align:center;top:264px;font-size:18px;color:#1E6B3F">I</div>
<div class="t" style="left:881.5px;width:80px;text-align:center;top:264px;font-size:18px;color:#1E6B3F">J</div>
<div class="t" style="left:956.0px;width:80px;text-align:center;top:264px;font-size:18px;color:#1E6B3F">K</div>
<div class="t" style="left:1044.0px;width:80px;text-align:center;top:264px;font-size:18px;color:#1E6B3F">L</div>
<div class="t" style="left:1132.0px;width:80px;text-align:center;top:264px;font-size:18px;color:#1E6B3F">M</div>
<div class="t" style="left:1220.0px;width:80px;text-align:center;top:264px;font-size:18px;color:#1E6B3F">N</div>
<div class="t" style="left:1308.0px;width:80px;text-align:center;top:264px;font-size:18px;color:#1E6B3F">O</div>
<div class="t" style="left:1396.0px;width:80px;text-align:center;top:264px;font-size:18px;color:#1E6B3F">P</div>
<div class="t" style="left:1484.0px;width:80px;text-align:center;top:264px;font-size:18px;color:#1E6B3F">Q</div>
<div class="t" style="left:1572.0px;width:80px;text-align:center;top:264px;font-size:18px;color:#1E6B3F">R</div>
<div class="t" style="left:1660.0px;width:80px;text-align:center;top:264px;font-size:18px;color:#1E6B3F">S</div>
<div class="t" style="left:1748.0px;width:80px;text-align:center;top:264px;font-size:18px;color:#444">T</div>
<div class="t" style="left:1836.0px;width:80px;text-align:center;top:264px;font-size:18px;color:#444">U</div>
<div class="ab" style="left:0;top:288px;width:36px;height:687px;background:#E6E6E6"></div>
<div class="ab" style="left:0;top:320px;width:36px;height:64px;background:#D2D2D2"></div>
<div class="ab" style="left:36px;top:287px;width:1px;height:688px;background:#ABABAB"></div>
<div class="ab" style="left:35px;top:320px;width:2px;height:64px;background:#217346"></div>
<div class="ab" style="left:0;top:319px;width:36px;height:1px;background:#C6C6C6"></div>
<div class="t" style="left:0;width:36px;text-align:center;top:296px;font-size:18px;color:#444">1</div>
<div class="ab" style="left:0;top:351px;width:36px;height:1px;background:#C6C6C6"></div>
<div class="t" style="left:0;width:36px;text-align:center;top:328px;font-size:18px;color:#1E6B3F">2</div>
<div class="ab" style="left:0;top:383px;width:36px;height:1px;background:#C6C6C6"></div>
<div class="t" style="left:0;width:36px;text-align:center;top:360px;font-size:18px;color:#1E6B3F">3</div>
<div class="ab" style="left:0;top:415px;width:36px;height:1px;background:#C6C6C6"></div>
<div class="t" style="left:0;width:36px;text-align:center;top:392px;font-size:18px;color:#444">4</div>
<div class="ab" style="left:0;top:447px;width:36px;height:1px;background:#C6C6C6"></div>
<div class="t" style="left:0;width:36px;text-align:center;top:424px;font-size:18px;color:#444">5</div>
<div class="ab" style="left:0;top:479px;width:36px;height:1px;background:#C6C6C6"></div>
<div class="t" style="left:0;width:36px;text-align:center;top:456px;font-size:18px;color:#444">6</div>
<div class="ab" style="left:0;top:511px;width:36px;height:1px;background:#C6C6C6"></div>
<div class="t" style="left:0;width:36px;text-align:center;top:488px;font-size:18px;color:#444">7</div>
<div class="ab" style="left:0;top:543px;width:36px;height:1px;background:#C6C6C6"></div>
<div class="t" style="left:0;width:36px;text-align:center;top:520px;font-size:18px;color:#444">8</div>
<div class="ab" style="left:0;top:575px;width:36px;height:1px;background:#C6C6C6"></div>
<div class="t" style="left:0;width:36px;text-align:center;top:552px;font-size:18px;color:#444">9</div>
<div class="ab" style="left:0;top:607px;width:36px;height:1px;background:#C6C6C6"></div>
<div class="t" style="left:0;width:36px;text-align:center;top:584px;font-size:18px;color:#444">10</div>
<div class="ab" style="left:0;top:639px;width:36px;height:1px;background:#C6C6C6"></div>
<div class="t" style="left:0;width:36px;text-align:center;top:616px;font-size:18px;color:#444">11</div>
<div class="ab" style="left:0;top:671px;width:36px;height:1px;background:#C6C6C6"></div>
<div class="t" style="left:0;width:36px;text-align:center;top:648px;font-size:18px;color:#444">12</div>
<div class="ab" style="left:0;top:703px;width:36px;height:1px;background:#C6C6C6"></div>
<div class="t" style="left:0;width:36px;text-align:center;top:680px;font-size:18px;color:#444">13</div>
<div class="ab" style="left:0;top:735px;width:36px;height:1px;background:#C6C6C6"></div>
<div class="t" style="left:0;width:36px;text-align:center;top:712px;font-size:18px;color:#444">14</div>
<div class="ab" style="left:0;top:767px;width:36px;height:1px;background:#C6C6C6"></div>
<div class="t" style="left:0;width:36px;text-align:center;top:744px;font-size:18px;color:#444">15</div>
<div class="ab" style="left:0;top:799px;width:36px;height:1px;background:#C6C6C6"></div>
<div class="t" style="left:0;width:36px;text-align:center;top:776px;font-size:18px;color:#444">16</div>
<div class="ab" style="left:0;top:831px;width:36px;height:1px;background:#C6C6C6"></div>
<div class="t" style="left:0;width:36px;text-align:center;top:808px;font-size:18px;color:#444">17</div>
<div class="ab" style="left:0;top:863px;width:36px;height:1px;background:#C6C6C6"></div>
<div class="t" style="left:0;width:36px;text-align:center;top:840px;font-size:18px;color:#444">18</div>
<div class="ab" style="left:0;top:895px;width:36px;height:1px;background:#C6C6C6"></div>
<div class="t" style="left:0;width:36px;text-align:center;top:872px;font-size:18px;color:#444">19</div>
<div class="ab" style="left:0;top:927px;width:36px;height:1px;background:#C6C6C6"></div>
<div class="t" style="left:0;width:36px;text-align:center;top:904px;font-size:18px;color:#444">20</div>
<div class="ab" style="left:0;top:959px;width:36px;height:1px;background:#C6C6C6"></div>
<div class="t" style="left:0;width:36px;text-align:center;top:936px;font-size:18px;color:#444">21</div>
<div class="ab" style="left:0;top:991px;width:36px;height:1px;background:#C6C6C6"></div>
<div class="t" style="left:0;width:36px;text-align:center;top:968px;font-size:18px;color:#444">22</div>
<div class="ab" style="left:37px;top:288px;width:1857px;height:687px;background:#fff;overflow:hidden">
<div class="gl" style="left:119px;top:0;width:1px;height:687px"></div>
<div class="gl" style="left:207px;top:0;width:1px;height:687px"></div>
<div class="gl" style="left:295px;top:0;width:1px;height:687px"></div>
<div class="gl" style="left:383px;top:0;width:1px;height:687px"></div>
<div class="gl" style="left:471px;top:0;width:1px;height:687px"></div>
<div class="gl" style="left:559px;top:0;width:1px;height:687px"></div>
<div class="gl" style="left:647px;top:0;width:1px;height:687px"></div>
<div class="gl" style="left:767px;top:0;width:1px;height:687px"></div>
<div class="gl" style="left:854px;top:0;width:1px;height:687px"></div>
<div class="gl" style="left:915px;top:0;width:1px;height:687px"></div>
<div class="gl" style="left:1003px;top:0;width:1px;height:687px"></div>
<div class="gl" style="left:1091px;top:0;width:1px;height:687px"></div>
<div class="gl" style="left:1179px;top:0;width:1px;height:687px"></div>
<div class="gl" style="left:1267px;top:0;width:1px;height:687px"></div>
<div class="gl" style="left:1355px;top:0;width:1px;height:687px"></div>
<div class="gl" style="left:1443px;top:0;width:1px;height:687px"></div>
<div class="gl" style="left:1531px;top:0;width:1px;height:687px"></div>
<div class="gl" style="left:1619px;top:0;width:1px;height:687px"></div>
<div class="gl" style="left:1707px;top:0;width:1px;height:687px"></div>
<div class="gl" style="left:1795px;top:0;width:1px;height:687px"></div>
<div class="gl" style="left:0;top:31px;width:1857px;height:1px"></div>
<div class="gl" style="left:0;top:63px;width:1857px;height:1px"></div>
<div class="gl" style="left:0;top:95px;width:1857px;height:1px"></div>
<div class="gl" style="left:0;top:127px;width:1857px;height:1px"></div>
<div class="gl" style="left:0;top:159px;width:1857px;height:1px"></div>
<div class="gl" style="left:0;top:191px;width:1857px;height:1px"></div>
<div class="gl" style="left:0;top:223px;width:1857px;height:1px"></div>
<div class="gl" style="left:0;top:255px;width:1857px;height:1px"></div>
<div class="gl" style="left:0;top:287px;width:1857px;height:1px"></div>
<div class="gl" style="left:0;top:319px;width:1857px;height:1px"></div>
<div class="gl" style="left:0;top:351px;width:1857px;height:1px"></div>
<div class="gl" style="left:0;top:383px;width:1857px;height:1px"></div>
<div class="gl" style="left:0;top:415px;width:1857px;height:1px"></div>
<div class="gl" style="left:0;top:447px;width:1857px;height:1px"></div>
<div class="gl" style="left:0;top:479px;width:1857px;height:1px"></div>
<div class="gl" style="left:0;top:511px;width:1857px;height:1px"></div>
<div class="gl" style="left:0;top:543px;width:1857px;height:1px"></div>
<div class="gl" style="left:0;top:575px;width:1857px;height:1px"></div>
<div class="gl" style="left:0;top:607px;width:1857px;height:1px"></div>
<div class="gl" style="left:0;top:639px;width:1857px;height:1px"></div>
<div class="gl" style="left:0;top:671px;width:1857px;height:1px"></div>
<div class="gl" style="left:0;top:703px;width:1857px;height:1px"></div>
<div class="c" style="left:0px;top:0px;width:119px;color:#333;">データ日付</div>
<div class="c" style="left:120px;top:0px;width:87px;color:#333;">始値</div>
<div class="c" style="left:208px;top:0px;width:87px;color:#333;">高値</div>
<div class="c" style="left:296px;top:0px;width:87px;color:#333;">安値</div>
<div class="c" style="left:384px;top:0px;width:87px;color:#333;">終値</div>
<div class="c" style="left:472px;top:0px;width:87px;color:#333;">前日比</div>
<div class="c" style="left:560px;top:0px;width:87px;color:#333;">比率</div>
<div class="c" style="left:648px;top:0px;width:119px;color:#333;">売買代金</div>
<div class="ab" style="left:767px;top:0px;width:88px;height:32px;background:#C6EFCE"></div>
<div class="c ce" style="left:768px;top:0px;width:86px;color:#217A27;">陽線陰線</div>
<div class="c" style="left:855px;top:0px;width:60px;color:#333;">連続数</div>
<div class="c" style="left:916px;top:0px;width:87px;color:#333;">終値前日比</div>
<div class="c" style="left:1004px;top:0px;width:87px;color:#333;">上幅下幅</div>
<div class="c" style="left:1092px;top:0px;width:87px;color:#333;">5日比較</div>
<div class="ab" style="left:1179px;top:0px;width:89px;height:32px;background:#C6EFCE"></div>
<div class="c" style="left:1268px;top:0px;width:87px;color:#333;">25日比較</div>
<div class="ab" style="left:1355px;top:0px;width:89px;height:32px;background:#C6EFCE"></div>
<div class="c" style="left:1444px;top:0px;width:87px;color:#333;">60日線</div>
<div class="ab" style="left:1531px;top:0px;width:89px;height:32px;background:#C6EFCE"></div>
<div class="c" style="left:1620px;top:0px;width:87px;color:#333;">トレンド</div>
<div class="c r" style="left:0px;top:32px;width:119px;color:#333;">2021<span class="sl">/</span>7<span class="sl">/</span>2</div>
<div class="c r" style="left:120px;top:32px;width:87px;color:#333;">3,977.83</div>
<div class="c r" style="left:208px;top:32px;width:87px;color:#333;">3,986.36</div>
<div class="c r" style="left:296px;top:32px;width:87px;color:#333;">3,976.64</div>
<div class="c r" style="left:384px;top:32px;width:87px;color:#333;">3,984.13</div>
<div class="ab" style="left:471px;top:32px;width:89px;height:32px;background:#FCFAFD"></div>
<div class="c r" style="left:472px;top:32px;width:87px;color:#333;">6.86</div>
<div class="ab" style="left:559px;top:32px;width:89px;height:32px;background:#FCFAFD"></div>
<div class="c r" style="left:560px;top:32px;width:87px;color:#333;">0.2</div>
<div class="c r" style="left:648px;top:32px;width:119px;color:#333;">143,309,600</div>
<div class="ab" style="left:767px;top:32px;width:88px;height:32px;background:#FFC7CE"></div>
<div class="c ce" style="left:768px;top:32px;width:86px;color:#AE2230;">陽</div>
<div class="c ce" style="left:855px;top:32px;width:60px;color:#333;">1</div>
<div class="c r" style="left:916px;top:32px;width:87px;color:#333;">7</div>
<div class="c r" style="left:1092px;top:32px;width:87px;color:#333;">3988.224</div>
<div class="ab" style="left:1179px;top:32px;width:89px;height:32px;background:#C6EFCE"></div>
<div class="c r" style="left:1180px;top:32px;width:87px;color:#217A27;">0.998973</div>
<div class="c r" style="left:1268px;top:32px;width:87px;color:#333;">3947.422</div>
<div class="ab" style="left:1355px;top:32px;width:89px;height:32px;background:#FFC7CE"></div>
<div class="c r" style="left:1356px;top:32px;width:87px;color:#AE2230;">1.009299</div>
<div class="c r" style="left:1444px;top:32px;width:87px;color:#333;">3916.385</div>
<div class="ab" style="left:1531px;top:32px;width:89px;height:32px;background:#FFC7CE"></div>
<div class="c r" style="left:1532px;top:32px;width:87px;color:#AE2230;">1.017298</div>
<div class="ab" style="left:1619px;top:32px;width:89px;height:32px;background:#FFC000"></div>
<div class="c" style="left:1620px;top:32px;width:87px;color:#222;">上昇</div>
<svg style="left:1268px;top:32px" width="7" height="7"><path d="M0 0 H7 L0 7Z" fill="#1E7B3C"/></svg>
<svg style="left:1444px;top:32px" width="7" height="7"><path d="M0 0 H7 L0 7Z" fill="#1E7B3C"/></svg>
<div class="c r" style="left:0px;top:64px;width:119px;color:#333;">2021<span class="sl">/</span>7<span class="sl">/</span>1</div>
<div class="c r" style="left:120px;top:64px;width:87px;color:#333;">4,001.59</div>
<div class="c r" style="left:208px;top:64px;width:87px;color:#333;">4,001.59</div>
<div class="c r" style="left:296px;top:64px;width:87px;color:#333;">3,977.27</div>
<div class="c r" style="left:384px;top:64px;width:87px;color:#333;">3,977.27</div>
<div class="ab" style="left:471px;top:64px;width:89px;height:32px;background:#ECF5F0"></div>
<div class="c r" style="left:472px;top:64px;width:87px;color:#333;">-20.23</div>
<div class="ab" style="left:559px;top:64px;width:89px;height:32px;background:#ECF5F1"></div>
<div class="c r" style="left:560px;top:64px;width:87px;color:#333;">-0.5</div>
<div class="c r" style="left:648px;top:64px;width:119px;color:#333;">174,357,200</div>
<div class="ab" style="left:767px;top:64px;width:88px;height:32px;background:#C6EFCE"></div>
<div class="c ce" style="left:768px;top:64px;width:86px;color:#217A27;">陰</div>
<div class="c ce" style="left:855px;top:64px;width:60px;color:#333;">1</div>
<div class="c r" style="left:916px;top:64px;width:87px;color:#333;">-20</div>
<div class="c r" style="left:1092px;top:64px;width:87px;color:#333;">3984.982</div>
<div class="ab" style="left:1179px;top:64px;width:89px;height:32px;background:#C6EFCE"></div>
<div class="c r" style="left:1180px;top:64px;width:87px;color:#217A27;">0.998065</div>
<div class="c r" style="left:1268px;top:64px;width:87px;color:#333;">3943.363</div>
<div class="ab" style="left:1355px;top:64px;width:89px;height:32px;background:#FFC7CE"></div>
<div class="c r" style="left:1356px;top:64px;width:87px;color:#AE2230;">1.008599</div>
<div class="c r" style="left:1444px;top:64px;width:87px;color:#333;">3915.925</div>
<div class="ab" style="left:1531px;top:64px;width:89px;height:32px;background:#FFC7CE"></div>
<div class="c r" style="left:1532px;top:64px;width:87px;color:#AE2230;">1.015665</div>
<div class="ab" style="left:1619px;top:64px;width:89px;height:32px;background:#FFC000"></div>
<div class="c" style="left:1620px;top:64px;width:87px;color:#222;">上昇</div>
<svg style="left:1268px;top:64px" width="7" height="7"><path d="M0 0 H7 L0 7Z" fill="#1E7B3C"/></svg>
<svg style="left:1444px;top:64px" width="7" height="7"><path d="M0 0 H7 L0 7Z" fill="#1E7B3C"/></svg>
<div class="c r" style="left:0px;top:96px;width:119px;color:#333;">2021<span class="sl">/</span>6<span class="sl">/</span>30</div>
<div class="c r" style="left:120px;top:96px;width:87px;color:#333;">3,996.00</div>
<div class="c r" style="left:208px;top:96px;width:87px;color:#333;">4,002.85</div>
<div class="c r" style="left:296px;top:96px;width:87px;color:#333;">3,992.44</div>
<div class="c r" style="left:384px;top:96px;width:87px;color:#333;">3,997.50</div>
<div class="ab" style="left:471px;top:96px;width:89px;height:32px;background:#FCF5F8"></div>
<div class="c r" style="left:472px;top:96px;width:87px;color:#333;">11.02</div>
<div class="ab" style="left:559px;top:96px;width:89px;height:32px;background:#FCF6F9"></div>
<div class="c r" style="left:560px;top:96px;width:87px;color:#333;">0.3</div>
<div class="c r" style="left:648px;top:96px;width:119px;color:#333;">101,449,800</div>
<div class="ab" style="left:767px;top:96px;width:88px;height:32px;background:#FFC7CE"></div>
<div class="c ce" style="left:768px;top:96px;width:86px;color:#AE2230;">陽</div>
<div class="c ce" style="left:855px;top:96px;width:60px;color:#333;">1</div>
<div class="c r" style="left:916px;top:96px;width:87px;color:#333;">11</div>
<div class="c r" style="left:1092px;top:96px;width:87px;color:#333;">3979.954</div>
<div class="ab" style="left:1179px;top:96px;width:89px;height:32px;background:#FFC7CE"></div>
<div class="c r" style="left:1180px;top:96px;width:87px;color:#AE2230;">1.004409</div>
<div class="c r" style="left:1268px;top:96px;width:87px;color:#333;">3939.176</div>
<div class="ab" style="left:1355px;top:96px;width:89px;height:32px;background:#FFC7CE"></div>
<div class="c r" style="left:1356px;top:96px;width:87px;color:#AE2230;">1.014806</div>
<div class="c r" style="left:1444px;top:96px;width:87px;color:#333;">3915.388</div>
<div class="ab" style="left:1531px;top:96px;width:89px;height:32px;background:#FFC7CE"></div>
<div class="c r" style="left:1532px;top:96px;width:87px;color:#AE2230;">1.020972</div>
<div class="ab" style="left:1619px;top:96px;width:89px;height:32px;background:#FFC000"></div>
<div class="c" style="left:1620px;top:96px;width:87px;color:#222;">上昇</div>
<svg style="left:1268px;top:96px" width="7" height="7"><path d="M0 0 H7 L0 7Z" fill="#1E7B3C"/></svg>
<svg style="left:1444px;top:96px" width="7" height="7"><path d="M0 0 H7 L0 7Z" fill="#1E7B3C"/></svg>
<div class="c r" style="left:0px;top:128px;width:119px;color:#333;">2021<span class="sl">/</span>6<span class="sl">/</span>29</div>
<div class="c r" style="left:120px;top:128px;width:87px;color:#333;">3,995.99</div>
<div class="c r" style="left:208px;top:128px;width:87px;color:#333;">3,996.74</div>
<div class="c r" style="left:296px;top:128px;width:87px;color:#333;">3,979.23</div>
<div class="c r" style="left:384px;top:128px;width:87px;color:#333;">3,986.48</div>
<div class="ab" style="left:471px;top:128px;width:89px;height:32px;background:#F3F8F7"></div>
<div class="c r" style="left:472px;top:128px;width:87px;color:#333;">-9.26</div>
<div class="ab" style="left:559px;top:128px;width:89px;height:32px;background:#F4F8F7"></div>
<div class="c r" style="left:560px;top:128px;width:87px;color:#333;">-0.2</div>
<div class="c r" style="left:648px;top:128px;width:119px;color:#333;">71,782,800</div>
<div class="ab" style="left:767px;top:128px;width:88px;height:32px;background:#C6EFCE"></div>
<div class="c ce" style="left:768px;top:128px;width:86px;color:#217A27;">陰</div>
<div class="c ce" style="left:855px;top:128px;width:60px;color:#333;">1</div>
<div class="c r" style="left:916px;top:128px;width:87px;color:#333;">-9</div>
<div class="c r" style="left:1092px;top:128px;width:87px;color:#333;">3972.36</div>
<div class="ab" style="left:1179px;top:128px;width:89px;height:32px;background:#FFC7CE"></div>
<div class="c r" style="left:1180px;top:128px;width:87px;color:#AE2230;">1.003555</div>
<div class="c r" style="left:1268px;top:128px;width:87px;color:#333;">3934.131</div>
<div class="ab" style="left:1355px;top:128px;width:89px;height:32px;background:#FFC7CE"></div>
<div class="c r" style="left:1356px;top:128px;width:87px;color:#AE2230;">1.013306</div>
<div class="c r" style="left:1444px;top:128px;width:87px;color:#333;">3914.391</div>
<div class="ab" style="left:1531px;top:128px;width:89px;height:32px;background:#FFC7CE"></div>
<div class="c r" style="left:1532px;top:128px;width:87px;color:#AE2230;">1.018416</div>
<div class="ab" style="left:1619px;top:128px;width:89px;height:32px;background:#FFC000"></div>
<div class="c" style="left:1620px;top:128px;width:87px;color:#222;">上昇</div>
<svg style="left:1268px;top:128px" width="7" height="7"><path d="M0 0 H7 L0 7Z" fill="#1E7B3C"/></svg>
<svg style="left:1444px;top:128px" width="7" height="7"><path d="M0 0 H7 L0 7Z" fill="#1E7B3C"/></svg>
<div class="c r" style="left:0px;top:160px;width:119px;color:#333;">2021<span class="sl">/</span>6<span class="sl">/</span>28</div>
<div class="c r" style="left:120px;top:160px;width:87px;color:#333;">3,981.35</div>
<div class="c r" style="left:208px;top:160px;width:87px;color:#333;">3,996.76</div>
<div class="c r" style="left:296px;top:160px;width:87px;color:#333;">3,980.67</div>
<div class="c r" style="left:384px;top:160px;width:87px;color:#333;">3,995.74</div>
<div class="ab" style="left:471px;top:160px;width:89px;height:32px;background:#FCE3E6"></div>
<div class="c r" style="left:472px;top:160px;width:87px;color:#333;">27.82</div>
<div class="ab" style="left:559px;top:160px;width:89px;height:32px;background:#FCE8EB"></div>
<div class="c r" style="left:560px;top:160px;width:87px;color:#333;">0.7</div>
<div class="c r" style="left:648px;top:160px;width:119px;color:#333;">126,115,100</div>
<div class="ab" style="left:767px;top:160px;width:88px;height:32px;background:#FFC7CE"></div>
<div class="c ce" style="left:768px;top:160px;width:86px;color:#AE2230;">陽</div>
<div class="c ce" style="left:855px;top:160px;width:60px;color:#333;">2</div>
<div class="c r" style="left:916px;top:160px;width:87px;color:#333;">44</div>
<div class="c r" style="left:1092px;top:160px;width:87px;color:#333;">3964.89</div>
<div class="ab" style="left:1179px;top:160px;width:89px;height:32px;background:#FFC7CE"></div>
<div class="c r" style="left:1180px;top:160px;width:87px;color:#AE2230;">1.007781</div>
<div class="c r" style="left:1268px;top:160px;width:87px;color:#333;">3929.639</div>
<div class="ab" style="left:1355px;top:160px;width:89px;height:32px;background:#FFC7CE"></div>
<div class="c r" style="left:1356px;top:160px;width:87px;color:#AE2230;">1.016821</div>
<div class="c r" style="left:1444px;top:160px;width:87px;color:#333;">3913.593</div>
<div class="ab" style="left:1531px;top:160px;width:89px;height:32px;background:#FFC7CE"></div>
<div class="c r" style="left:1532px;top:160px;width:87px;color:#AE2230;">1.02099</div>
<div class="ab" style="left:1619px;top:160px;width:89px;height:32px;background:#FFC000"></div>
<div class="c" style="left:1620px;top:160px;width:87px;color:#222;">上昇</div>
<svg style="left:1268px;top:160px" width="7" height="7"><path d="M0 0 H7 L0 7Z" fill="#1E7B3C"/></svg>
<svg style="left:1444px;top:160px" width="7" height="7"><path d="M0 0 H7 L0 7Z" fill="#1E7B3C"/></svg>
<div class="c r" style="left:0px;top:192px;width:119px;color:#333;">2021<span class="sl">/</span>6<span class="sl">/</span>25</div>
<div class="c r" style="left:120px;top:192px;width:87px;color:#333;">3,963.85</div>
<div class="c r" style="left:208px;top:192px;width:87px;color:#333;">3,968.39</div>
<div class="c r" style="left:296px;top:192px;width:87px;color:#333;">3,959.60</div>
<div class="c r" style="left:384px;top:192px;width:87px;color:#333;">3,967.92</div>
<div class="ab" style="left:471px;top:192px;width:89px;height:32px;background:#FCF0F3"></div>
<div class="c r" style="left:472px;top:192px;width:87px;color:#333;">15.79</div>
<div class="ab" style="left:559px;top:192px;width:89px;height:32px;background:#FCF3F6"></div>
<div class="c r" style="left:560px;top:192px;width:87px;color:#333;">0.4</div>
<div class="c r" style="left:648px;top:192px;width:119px;color:#333;">70,902,000</div>
<div class="ab" style="left:767px;top:192px;width:88px;height:32px;background:#FFC7CE"></div>
<div class="c ce" style="left:768px;top:192px;width:86px;color:#AE2230;">陽</div>
<div class="c ce" style="left:855px;top:192px;width:60px;color:#333;">1</div>
<div class="c r" style="left:916px;top:192px;width:87px;color:#333;">16</div>
<div class="c r" style="left:1092px;top:192px;width:87px;color:#333;">3948.28</div>
<div class="ab" style="left:1179px;top:192px;width:89px;height:32px;background:#FFC7CE"></div>
<div class="c r" style="left:1180px;top:192px;width:87px;color:#AE2230;">1.004974</div>
<div class="c r" style="left:1268px;top:192px;width:87px;color:#333;">3924.071</div>
<div class="ab" style="left:1355px;top:192px;width:89px;height:32px;background:#FFC7CE"></div>
<div class="c r" style="left:1356px;top:192px;width:87px;color:#AE2230;">1.011174</div>
<div class="c r" style="left:1444px;top:192px;width:87px;color:#333;">3912.267</div>
<div class="ab" style="left:1531px;top:192px;width:89px;height:32px;background:#FFC7CE"></div>
<div class="c r" style="left:1532px;top:192px;width:87px;color:#AE2230;">1.014225</div>
<div class="ab" style="left:1619px;top:192px;width:89px;height:32px;background:#FFC000"></div>
<div class="c" style="left:1620px;top:192px;width:87px;color:#222;">上昇</div>
<svg style="left:1268px;top:192px" width="7" height="7"><path d="M0 0 H7 L0 7Z" fill="#1E7B3C"/></svg>
<svg style="left:1444px;top:192px" width="7" height="7"><path d="M0 0 H7 L0 7Z" fill="#1E7B3C"/></svg>
<div class="c r" style="left:0px;top:224px;width:119px;color:#333;">2021<span class="sl">/</span>6<span class="sl">/</span>24</div>
<div class="c r" style="left:120px;top:224px;width:87px;color:#333;">3,964.18</div>
<div class="c r" style="left:208px;top:224px;width:87px;color:#333;">3,972.26</div>
<div class="c r" style="left:296px;top:224px;width:87px;color:#333;">3,952.13</div>
<div class="c r" style="left:384px;top:224px;width:87px;color:#333;">3,952.13</div>
<div class="ab" style="left:471px;top:224px;width:89px;height:32px;background:#F4F9F8"></div>
<div class="c r" style="left:472px;top:224px;width:87px;color:#333;">-7.4</div>
<div class="ab" style="left:559px;top:224px;width:89px;height:32px;background:#F4F8F7"></div>
<div class="c r" style="left:560px;top:224px;width:87px;color:#333;">-0.2</div>
<div class="c r" style="left:648px;top:224px;width:119px;color:#333;">70,146,000</div>
<div class="ab" style="left:767px;top:224px;width:88px;height:32px;background:#C6EFCE"></div>
<div class="c ce" style="left:768px;top:224px;width:86px;color:#217A27;">陰</div>
<div class="c ce" style="left:855px;top:224px;width:60px;color:#333;">1</div>
<div class="c r" style="left:916px;top:224px;width:87px;color:#333;">-7</div>
<div class="c r" style="left:1092px;top:224px;width:87px;color:#333;">3947.12</div>
<div class="ab" style="left:1179px;top:224px;width:89px;height:32px;background:#FFC7CE"></div>
<div class="c r" style="left:1180px;top:224px;width:87px;color:#AE2230;">1.001269</div>
<div class="c r" style="left:1268px;top:224px;width:87px;color:#333;">3919.552</div>
<div class="ab" style="left:1355px;top:224px;width:89px;height:32px;background:#FFC7CE"></div>
<div class="c r" style="left:1356px;top:224px;width:87px;color:#AE2230;">1.008312</div>
<div class="c r" style="left:1444px;top:224px;width:87px;color:#333;">3911.54</div>
<div class="ab" style="left:1531px;top:224px;width:89px;height:32px;background:#FFC7CE"></div>
<div class="c r" style="left:1532px;top:224px;width:87px;color:#AE2230;">1.010377</div>
<div class="ab" style="left:1619px;top:224px;width:89px;height:32px;background:#FFC000"></div>
<div class="c" style="left:1620px;top:224px;width:87px;color:#222;">上昇</div>
<svg style="left:1268px;top:224px" width="7" height="7"><path d="M0 0 H7 L0 7Z" fill="#1E7B3C"/></svg>
<svg style="left:1444px;top:224px" width="7" height="7"><path d="M0 0 H7 L0 7Z" fill="#1E7B3C"/></svg>
<div class="c r" style="left:0px;top:256px;width:119px;color:#333;">2021<span class="sl">/</span>6<span class="sl">/</span>23</div>
<div class="c r" style="left:120px;top:256px;width:87px;color:#333;">3,954.91</div>
<div class="c r" style="left:208px;top:256px;width:87px;color:#333;">3,961.39</div>
<div class="c r" style="left:296px;top:256px;width:87px;color:#333;">3,951.30</div>
<div class="c r" style="left:384px;top:256px;width:87px;color:#333;">3,959.53</div>
<div class="ab" style="left:471px;top:256px;width:89px;height:32px;background:#FCF6F9"></div>
<div class="c r" style="left:472px;top:256px;width:87px;color:#333;">10.4</div>
<div class="ab" style="left:559px;top:256px;width:89px;height:32px;background:#FCF6F9"></div>
<div class="c r" style="left:560px;top:256px;width:87px;color:#333;">0.3</div>
<div class="c r" style="left:648px;top:256px;width:119px;color:#333;">67,936,500</div>
<div class="ab" style="left:767px;top:256px;width:88px;height:32px;background:#FFC7CE"></div>
<div class="c ce" style="left:768px;top:256px;width:86px;color:#AE2230;">陽</div>
<div class="c ce" style="left:855px;top:256px;width:60px;color:#333;">2</div>
<div class="c r" style="left:916px;top:256px;width:87px;color:#333;">47</div>
<div class="c r" style="left:1092px;top:256px;width:87px;color:#333;">3951.532</div>
<div class="ab" style="left:1179px;top:256px;width:89px;height:32px;background:#FFC7CE"></div>
<div class="c r" style="left:1180px;top:256px;width:87px;color:#AE2230;">1.002024</div>
<div class="c r" style="left:1268px;top:256px;width:87px;color:#333;">3915.072</div>
<div class="ab" style="left:1355px;top:256px;width:89px;height:32px;background:#FFC7CE"></div>
<div class="c r" style="left:1356px;top:256px;width:87px;color:#AE2230;">1.011356</div>
<div class="c r" style="left:1444px;top:256px;width:87px;color:#333;">3911.089</div>
<div class="ab" style="left:1531px;top:256px;width:89px;height:32px;background:#FFC7CE"></div>
<div class="c r" style="left:1532px;top:256px;width:87px;color:#AE2230;">1.012386</div>
<div class="ab" style="left:1619px;top:256px;width:89px;height:32px;background:#FFC000"></div>
<div class="c" style="left:1620px;top:256px;width:87px;color:#222;">上昇</div>
<svg style="left:1268px;top:256px" width="7" height="7"><path d="M0 0 H7 L0 7Z" fill="#1E7B3C"/></svg>
<svg style="left:1444px;top:256px" width="7" height="7"><path d="M0 0 H7 L0 7Z" fill="#1E7B3C"/></svg>
<div class="c r" style="left:0px;top:288px;width:119px;color:#333;">2021<span class="sl">/</span>6<span class="sl">/</span>22</div>
<div class="c r" style="left:120px;top:288px;width:87px;color:#333;">3,936.72</div>
<div class="c r" style="left:208px;top:288px;width:87px;color:#333;">3,952.99</div>
<div class="c r" style="left:296px;top:288px;width:87px;color:#333;">3,936.19</div>
<div class="c r" style="left:384px;top:288px;width:87px;color:#333;">3,949.13</div>
<div class="ab" style="left:471px;top:288px;width:89px;height:32px;background:#FCD9DC"></div>
<div class="c r" style="left:472px;top:288px;width:87px;color:#333;">36.44</div>
<div class="ab" style="left:559px;top:288px;width:89px;height:32px;background:#FCE0E3"></div>
<div class="c r" style="left:560px;top:288px;width:87px;color:#333;">0.9</div>
<div class="c r" style="left:648px;top:288px;width:119px;color:#333;">69,374,400</div>
<div class="ab" style="left:767px;top:288px;width:88px;height:32px;background:#FFC7CE"></div>
<div class="c ce" style="left:768px;top:288px;width:86px;color:#AE2230;">陽</div>
<div class="c ce" style="left:855px;top:288px;width:60px;color:#333;">1</div>
<div class="c r" style="left:916px;top:288px;width:87px;color:#333;">36</div>
<div class="c r" style="left:1092px;top:288px;width:87px;color:#333;">3953.672</div>
<div class="ab" style="left:1179px;top:288px;width:89px;height:32px;background:#C6EFCE"></div>
<div class="c r" style="left:1180px;top:288px;width:87px;color:#217A27;">0.998851</div>
<div class="c r" style="left:1268px;top:288px;width:87px;color:#333;">3909.221</div>
<div class="ab" style="left:1355px;top:288px;width:89px;height:32px;background:#FFC7CE"></div>
<div class="c r" style="left:1356px;top:288px;width:87px;color:#AE2230;">1.010209</div>
<div class="c r" style="left:1444px;top:288px;width:87px;color:#333;">3910.153</div>
<div class="ab" style="left:1531px;top:288px;width:89px;height:32px;background:#FFC7CE"></div>
<div class="c r" style="left:1532px;top:288px;width:87px;color:#AE2230;">1.009968</div>
<svg style="left:1268px;top:288px" width="7" height="7"><path d="M0 0 H7 L0 7Z" fill="#1E7B3C"/></svg>
<svg style="left:1444px;top:288px" width="7" height="7"><path d="M0 0 H7 L0 7Z" fill="#1E7B3C"/></svg>
<div class="c r" style="left:0px;top:320px;width:119px;color:#333;">2021<span class="sl">/</span>6<span class="sl">/</span>21</div>
<div class="c r" style="left:120px;top:320px;width:87px;color:#333;">3,928.77</div>
<div class="c r" style="left:208px;top:320px;width:87px;color:#333;">3,928.77</div>
<div class="c r" style="left:296px;top:320px;width:87px;color:#333;">3,910.19</div>
<div class="c r" style="left:384px;top:320px;width:87px;color:#333;">3,912.69</div>
<div class="ab" style="left:471px;top:320px;width:89px;height:32px;background:#D9EDDF"></div>
<div class="c r" style="left:472px;top:320px;width:87px;color:#333;">-49.43</div>
<div class="ab" style="left:559px;top:320px;width:89px;height:32px;background:#DBEEE1"></div>
<div class="c r" style="left:560px;top:320px;width:87px;color:#333;">-1.2</div>
<div class="c r" style="left:648px;top:320px;width:119px;color:#333;">101,724,500</div>
<div class="ab" style="left:767px;top:320px;width:88px;height:32px;background:#C6EFCE"></div>
<div class="c ce" style="left:768px;top:320px;width:86px;color:#217A27;">陰</div>
<div class="c ce" style="left:855px;top:320px;width:60px;color:#333;">2</div>
<div class="c r" style="left:916px;top:320px;width:87px;color:#333;">-62</div>
<div class="ab" style="left:1003px;top:320px;width:89px;height:32px;background:#5B9BD5"></div>
<div class="c" style="left:1004px;top:320px;width:87px;color:#222;">50越え</div>
<div class="c r" style="left:1092px;top:320px;width:87px;color:#333;">3956.352</div>
<div class="ab" style="left:1179px;top:320px;width:89px;height:32px;background:#C6EFCE"></div>
<div class="c r" style="left:1180px;top:320px;width:87px;color:#217A27;">0.988964</div>
<div class="c r" style="left:1268px;top:320px;width:87px;color:#333;">3903.314</div>
<div class="ab" style="left:1355px;top:320px;width:89px;height:32px;background:#FFC7CE"></div>
<div class="c r" style="left:1356px;top:320px;width:87px;color:#AE2230;">1.002402</div>
<div class="c r" style="left:1444px;top:320px;width:87px;color:#333;">3909.013</div>
<div class="ab" style="left:1531px;top:320px;width:89px;height:32px;background:#FFC7CE"></div>
<div class="c r" style="left:1532px;top:320px;width:87px;color:#AE2230;">1.000941</div>
<svg style="left:1268px;top:320px" width="7" height="7"><path d="M0 0 H7 L0 7Z" fill="#1E7B3C"/></svg>
<svg style="left:1444px;top:320px" width="7" height="7"><path d="M0 0 H7 L0 7Z" fill="#1E7B3C"/></svg>
<div class="c r" style="left:0px;top:352px;width:119px;color:#333;">2021<span class="sl">/</span>6<span class="sl">/</span>18</div>
<div class="c r" style="left:120px;top:352px;width:87px;color:#333;">3,984.15</div>
<div class="c r" style="left:208px;top:352px;width:87px;color:#333;">3,989.62</div>
<div class="c r" style="left:296px;top:352px;width:87px;color:#333;">3,958.30</div>
<div class="c r" style="left:384px;top:352px;width:87px;color:#333;">3,962.12</div>
<div class="ab" style="left:471px;top:352px;width:89px;height:32px;background:#F1F7F5"></div>
<div class="c r" style="left:472px;top:352px;width:87px;color:#333;">-12.07</div>
<div class="ab" style="left:559px;top:352px;width:89px;height:32px;background:#F1F7F5"></div>
<div class="c r" style="left:560px;top:352px;width:87px;color:#333;">-0.3</div>
<div class="c r" style="left:648px;top:352px;width:119px;color:#333;">113,706,900</div>
<div class="ab" style="left:767px;top:352px;width:88px;height:32px;background:#C6EFCE"></div>
<div class="c ce" style="left:768px;top:352px;width:86px;color:#217A27;">陰</div>
<div class="c ce" style="left:855px;top:352px;width:60px;color:#333;">1</div>
<div class="c r" style="left:916px;top:352px;width:87px;color:#333;">-12</div>
<div class="c r" style="left:1092px;top:352px;width:87px;color:#333;">3965.092</div>
<div class="ab" style="left:1179px;top:352px;width:89px;height:32px;background:#C6EFCE"></div>
<div class="c r" style="left:1180px;top:352px;width:87px;color:#217A27;">0.99925</div>
<div class="c r" style="left:1268px;top:352px;width:87px;color:#333;">3897.987</div>
<div class="ab" style="left:1355px;top:352px;width:89px;height:32px;background:#FFC7CE"></div>
<div class="c r" style="left:1356px;top:352px;width:87px;color:#AE2230;">1.016453</div>
<div class="c r" style="left:1444px;top:352px;width:87px;color:#333;">3909.349</div>
<div class="ab" style="left:1531px;top:352px;width:89px;height:32px;background:#FFC7CE"></div>
<div class="c r" style="left:1532px;top:352px;width:87px;color:#AE2230;">1.013499</div>
<svg style="left:1268px;top:352px" width="7" height="7"><path d="M0 0 H7 L0 7Z" fill="#1E7B3C"/></svg>
<svg style="left:1444px;top:352px" width="7" height="7"><path d="M0 0 H7 L0 7Z" fill="#1E7B3C"/></svg>
<div class="c r" style="left:0px;top:384px;width:119px;color:#333;">2021<span class="sl">/</span>6<span class="sl">/</span>17</div>
<div class="c r" style="left:120px;top:384px;width:87px;color:#333;">3,969.03</div>
<div class="c r" style="left:208px;top:384px;width:87px;color:#333;">3,976.59</div>
<div class="c r" style="left:296px;top:384px;width:87px;color:#333;">3,963.17</div>
<div class="c r" style="left:384px;top:384px;width:87px;color:#333;">3,974.19</div>
<div class="ab" style="left:471px;top:384px;width:89px;height:32px;background:#FBFCFE"></div>
<div class="c r" style="left:472px;top:384px;width:87px;color:#333;">3.96</div>
<div class="ab" style="left:559px;top:384px;width:89px;height:32px;background:#FBFBFE"></div>
<div class="c r" style="left:560px;top:384px;width:87px;color:#333;">0.1</div>
<div class="c r" style="left:648px;top:384px;width:119px;color:#333;">67,515,400</div>
<div class="ab" style="left:767px;top:384px;width:88px;height:32px;background:#FFC7CE"></div>
<div class="c ce" style="left:768px;top:384px;width:86px;color:#AE2230;">陽</div>
<div class="c ce" style="left:855px;top:384px;width:60px;color:#333;">4</div>
<div class="c r" style="left:916px;top:384px;width:87px;color:#333;">37</div>
<div class="c r" style="left:1092px;top:384px;width:87px;color:#333;">3960.194</div>
<div class="ab" style="left:1179px;top:384px;width:89px;height:32px;background:#FFC7CE"></div>
<div class="c r" style="left:1180px;top:384px;width:87px;color:#AE2230;">1.003534</div>
<div class="c r" style="left:1268px;top:384px;width:87px;color:#333;">3892.75</div>
<div class="ab" style="left:1355px;top:384px;width:89px;height:32px;background:#FFC7CE"></div>
<div class="c r" style="left:1356px;top:384px;width:87px;color:#AE2230;">1.020921</div>
<div class="c r" style="left:1444px;top:384px;width:87px;color:#333;">3909.025</div>
<div class="ab" style="left:1531px;top:384px;width:89px;height:32px;background:#FFC7CE"></div>
<div class="c r" style="left:1532px;top:384px;width:87px;color:#AE2230;">1.01667</div>
<svg style="left:1268px;top:384px" width="7" height="7"><path d="M0 0 H7 L0 7Z" fill="#1E7B3C"/></svg>
<svg style="left:1444px;top:384px" width="7" height="7"><path d="M0 0 H7 L0 7Z" fill="#1E7B3C"/></svg>
<div class="c r" style="left:0px;top:416px;width:119px;color:#333;">2021<span class="sl">/</span>6<span class="sl">/</span>16</div>
<div class="c r" style="left:120px;top:416px;width:87px;color:#333;">3,959.46</div>
<div class="c r" style="left:208px;top:416px;width:87px;color:#333;">3,970.94</div>
<div class="c r" style="left:296px;top:416px;width:87px;color:#333;">3,955.30</div>
<div class="c r" style="left:384px;top:416px;width:87px;color:#333;">3,970.23</div>
<div class="ab" style="left:471px;top:416px;width:89px;height:32px;background:#FCF9FC"></div>
<div class="c r" style="left:472px;top:416px;width:87px;color:#333;">7.7</div>
<div class="ab" style="left:559px;top:416px;width:89px;height:32px;background:#FCFAFD"></div>
<div class="c r" style="left:560px;top:416px;width:87px;color:#333;">0.2</div>
<div class="c r" style="left:648px;top:416px;width:119px;color:#333;">60,841,300</div>
<div class="ab" style="left:767px;top:416px;width:88px;height:32px;background:#FFC7CE"></div>
<div class="c ce" style="left:768px;top:416px;width:86px;color:#AE2230;">陽</div>
<div class="c ce" style="left:855px;top:416px;width:60px;color:#333;">3</div>
<div class="c r" style="left:916px;top:416px;width:87px;color:#333;">33</div>
<div class="c r" style="left:1092px;top:416px;width:87px;color:#333;">3953.476</div>
<div class="ab" style="left:1179px;top:416px;width:89px;height:32px;background:#FFC7CE"></div>
<div class="c r" style="left:1180px;top:416px;width:87px;color:#AE2230;">1.004238</div>
<div class="c r" style="left:1268px;top:416px;width:87px;color:#333;">3885.982</div>
<div class="ab" style="left:1355px;top:416px;width:89px;height:32px;background:#FFC7CE"></div>
<div class="c r" style="left:1356px;top:416px;width:87px;color:#AE2230;">1.02168</div>
<div class="c r" style="left:1444px;top:416px;width:87px;color:#333;">3908.326</div>
<div class="ab" style="left:1531px;top:416px;width:89px;height:32px;background:#FFC7CE"></div>
<div class="c r" style="left:1532px;top:416px;width:87px;color:#AE2230;">1.015839</div>
<svg style="left:1268px;top:416px" width="7" height="7"><path d="M0 0 H7 L0 7Z" fill="#1E7B3C"/></svg>
<svg style="left:1444px;top:416px" width="7" height="7"><path d="M0 0 H7 L0 7Z" fill="#1E7B3C"/></svg>
<div class="c r" style="left:0px;top:448px;width:119px;color:#333;">2021<span class="sl">/</span>6<span class="sl">/</span>15</div>
<div class="c r" style="left:120px;top:448px;width:87px;color:#333;">3,960.07</div>
<div class="c r" style="left:208px;top:448px;width:87px;color:#333;">3,964.00</div>
<div class="c r" style="left:296px;top:448px;width:87px;color:#333;">3,955.27</div>
<div class="c r" style="left:384px;top:448px;width:87px;color:#333;">3,962.53</div>
<div class="ab" style="left:471px;top:448px;width:89px;height:32px;background:#FCFBFE"></div>
<div class="c r" style="left:472px;top:448px;width:87px;color:#333;">6.14</div>
<div class="ab" style="left:559px;top:448px;width:89px;height:32px;background:#FCFAFD"></div>
<div class="c r" style="left:560px;top:448px;width:87px;color:#333;">0.2</div>
<div class="c r" style="left:648px;top:448px;width:119px;color:#333;">68,106,300</div>
<div class="ab" style="left:767px;top:448px;width:88px;height:32px;background:#FFC7CE"></div>
<div class="c ce" style="left:768px;top:448px;width:86px;color:#AE2230;">陽</div>
<div class="c ce" style="left:855px;top:448px;width:60px;color:#333;">2</div>
<div class="c r" style="left:916px;top:448px;width:87px;color:#333;">25</div>
<div class="c r" style="left:1092px;top:448px;width:87px;color:#333;">3945.972</div>
<div class="ab" style="left:1179px;top:448px;width:89px;height:32px;background:#FFC7CE"></div>
<div class="c r" style="left:1180px;top:448px;width:87px;color:#AE2230;">1.004196</div>
<div class="c r" style="left:1268px;top:448px;width:87px;color:#333;">3880.893</div>
<div class="ab" style="left:1355px;top:448px;width:89px;height:32px;background:#FFC7CE"></div>
<div class="c r" style="left:1356px;top:448px;width:87px;color:#AE2230;">1.021036</div>
<div class="c r" style="left:1444px;top:448px;width:87px;color:#333;">3907.58</div>
<div class="ab" style="left:1531px;top:448px;width:89px;height:32px;background:#FFC7CE"></div>
<div class="c r" style="left:1532px;top:448px;width:87px;color:#AE2230;">1.014062</div>
<svg style="left:1268px;top:448px" width="7" height="7"><path d="M0 0 H7 L0 7Z" fill="#1E7B3C"/></svg>
<svg style="left:1444px;top:448px" width="7" height="7"><path d="M0 0 H7 L0 7Z" fill="#1E7B3C"/></svg>
<div class="c r" style="left:0px;top:480px;width:119px;color:#333;">2021<span class="sl">/</span>6<span class="sl">/</span>14</div>
<div class="c r" style="left:120px;top:480px;width:87px;color:#333;">3,944.87</div>
<div class="c r" style="left:208px;top:480px;width:87px;color:#333;">3,957.58</div>
<div class="c r" style="left:296px;top:480px;width:87px;color:#333;">3,936.44</div>
<div class="c r" style="left:384px;top:480px;width:87px;color:#333;">3,956.39</div>
<div class="ab" style="left:471px;top:480px;width:89px;height:32px;background:#FCEDF0"></div>
<div class="c r" style="left:472px;top:480px;width:87px;color:#333;">18.76</div>
<div class="ab" style="left:559px;top:480px;width:89px;height:32px;background:#FCEFF2"></div>
<div class="c r" style="left:560px;top:480px;width:87px;color:#333;">0.5</div>
<div class="c r" style="left:648px;top:480px;width:119px;color:#333;">65,006,000</div>
<div class="ab" style="left:767px;top:480px;width:88px;height:32px;background:#FFC7CE"></div>
<div class="c ce" style="left:768px;top:480px;width:86px;color:#AE2230;">陽</div>
<div class="c ce" style="left:855px;top:480px;width:60px;color:#333;">1</div>
<div class="c r" style="left:916px;top:480px;width:87px;color:#333;">19</div>
<div class="c r" style="left:1092px;top:480px;width:87px;color:#333;">3940.348</div>
<div class="ab" style="left:1179px;top:480px;width:89px;height:32px;background:#FFC7CE"></div>
<div class="c r" style="left:1180px;top:480px;width:87px;color:#AE2230;">1.004071</div>
<div class="c r" style="left:1268px;top:480px;width:87px;color:#333;">3877.978</div>
<div class="ab" style="left:1355px;top:480px;width:89px;height:32px;background:#FFC7CE"></div>
<div class="c r" style="left:1356px;top:480px;width:87px;color:#AE2230;">1.02022</div>
<div class="c r" style="left:1444px;top:480px;width:87px;color:#333;">3906.534</div>
<div class="ab" style="left:1531px;top:480px;width:89px;height:32px;background:#FFC7CE"></div>
<div class="c r" style="left:1532px;top:480px;width:87px;color:#AE2230;">1.012762</div>
<svg style="left:1268px;top:480px" width="7" height="7"><path d="M0 0 H7 L0 7Z" fill="#1E7B3C"/></svg>
<svg style="left:1444px;top:480px" width="7" height="7"><path d="M0 0 H7 L0 7Z" fill="#1E7B3C"/></svg>
<div class="c r" style="left:0px;top:512px;width:119px;color:#333;">2021<span class="sl">/</span>6<span class="sl">/</span>11</div>
<div class="c r" style="left:120px;top:512px;width:87px;color:#333;">3,944.54</div>
<div class="c r" style="left:208px;top:512px;width:87px;color:#333;">3,946.52</div>
<div class="c r" style="left:296px;top:512px;width:87px;color:#333;">3,932.52</div>
<div class="c r" style="left:384px;top:512px;width:87px;color:#333;">3,937.63</div>
<div class="ab" style="left:471px;top:512px;width:89px;height:32px;background:#F7FAFA"></div>
<div class="c r" style="left:472px;top:512px;width:87px;color:#333;">-2.97</div>
<div class="ab" style="left:559px;top:512px;width:89px;height:32px;background:#F6F9F9"></div>
<div class="c r" style="left:560px;top:512px;width:87px;color:#333;">-0.1</div>
<div class="c r" style="left:648px;top:512px;width:119px;color:#333;">62,935,400</div>
<div class="ab" style="left:767px;top:512px;width:88px;height:32px;background:#C6EFCE"></div>
<div class="c ce" style="left:768px;top:512px;width:86px;color:#217A27;">陰</div>
<div class="c ce" style="left:855px;top:512px;width:60px;color:#333;">1</div>
<div class="c r" style="left:916px;top:512px;width:87px;color:#333;">-3</div>
<div class="c r" style="left:1092px;top:512px;width:87px;color:#333;">3933.886</div>
<div class="ab" style="left:1179px;top:512px;width:89px;height:32px;background:#FFC7CE"></div>
<div class="c r" style="left:1180px;top:512px;width:87px;color:#AE2230;">1.000952</div>
<div class="c r" style="left:1268px;top:512px;width:87px;color:#333;">3876.423</div>
<div class="ab" style="left:1355px;top:512px;width:89px;height:32px;background:#FFC7CE"></div>
<div class="c r" style="left:1356px;top:512px;width:87px;color:#AE2230;">1.01579</div>
<div class="c r" style="left:1444px;top:512px;width:87px;color:#333;">3905.34</div>
<div class="ab" style="left:1531px;top:512px;width:89px;height:32px;background:#FFC7CE"></div>
<div class="c r" style="left:1532px;top:512px;width:87px;color:#AE2230;">1.008268</div>
<svg style="left:1268px;top:512px" width="7" height="7"><path d="M0 0 H7 L0 7Z" fill="#1E7B3C"/></svg>
<svg style="left:1444px;top:512px" width="7" height="7"><path d="M0 0 H7 L0 7Z" fill="#1E7B3C"/></svg>
<div class="c r" style="left:0px;top:544px;width:119px;color:#333;">2021<span class="sl">/</span>6<span class="sl">/</span>10</div>
<div class="c r" style="left:120px;top:544px;width:87px;color:#333;">3,931.61</div>
<div class="c r" style="left:208px;top:544px;width:87px;color:#333;">3,940.62</div>
<div class="c r" style="left:296px;top:544px;width:87px;color:#333;">3,930.59</div>
<div class="c r" style="left:384px;top:544px;width:87px;color:#333;">3,940.60</div>
<div class="ab" style="left:471px;top:544px;width:89px;height:32px;background:#FCF9FC"></div>
<div class="c r" style="left:472px;top:544px;width:87px;color:#333;">7.89</div>
<div class="ab" style="left:559px;top:544px;width:89px;height:32px;background:#FCFAFD"></div>
<div class="c r" style="left:560px;top:544px;width:87px;color:#333;">0.2</div>
<div class="c r" style="left:648px;top:544px;width:119px;color:#333;">77,855,400</div>
<div class="ab" style="left:767px;top:544px;width:88px;height:32px;background:#FFC7CE"></div>
<div class="c ce" style="left:768px;top:544px;width:86px;color:#AE2230;">陽</div>
<div class="c ce" style="left:855px;top:544px;width:60px;color:#333;">1</div>
<div class="c r" style="left:916px;top:544px;width:87px;color:#333;">8</div>
<div class="c r" style="left:1092px;top:544px;width:87px;color:#333;">3928.626</div>
<div class="ab" style="left:1179px;top:544px;width:89px;height:32px;background:#FFC7CE"></div>
<div class="c r" style="left:1180px;top:544px;width:87px;color:#AE2230;">1.003048</div>
<div class="c r" style="left:1268px;top:544px;width:87px;color:#333;">3875.54</div>
<div class="ab" style="left:1355px;top:544px;width:89px;height:32px;background:#FFC7CE"></div>
<div class="c r" style="left:1356px;top:544px;width:87px;color:#AE2230;">1.016787</div>
<div class="c r" style="left:1444px;top:544px;width:87px;color:#333;">3904.156</div>
<div class="ab" style="left:1531px;top:544px;width:89px;height:32px;background:#FFC7CE"></div>
<div class="c r" style="left:1532px;top:544px;width:87px;color:#AE2230;">1.009335</div>
<svg style="left:1268px;top:544px" width="7" height="7"><path d="M0 0 H7 L0 7Z" fill="#1E7B3C"/></svg>
<svg style="left:1444px;top:544px" width="7" height="7"><path d="M0 0 H7 L0 7Z" fill="#1E7B3C"/></svg>
<div class="c r" style="left:0px;top:576px;width:119px;color:#333;">2021<span class="sl">/</span>6<span class="sl">/</span>9</div>
<div class="c r" style="left:120px;top:576px;width:87px;color:#333;">3,933.59</div>
<div class="c r" style="left:208px;top:576px;width:87px;color:#333;">3,940.27</div>
<div class="c r" style="left:296px;top:576px;width:87px;color:#333;">3,929.21</div>
<div class="c r" style="left:384px;top:576px;width:87px;color:#333;">3,932.71</div>
<div class="ab" style="left:471px;top:576px;width:89px;height:32px;background:#F8FAFB"></div>
<div class="c r" style="left:472px;top:576px;width:87px;color:#333;">-1.7</div>
<div class="ab" style="left:559px;top:576px;width:89px;height:32px;background:#F8FAFC"></div>
<div class="c r" style="left:560px;top:576px;width:87px;color:#333;">0</div>
<div class="c r" style="left:648px;top:576px;width:119px;color:#333;">73,234,800</div>
<div class="ab" style="left:767px;top:576px;width:88px;height:32px;background:#C6EFCE"></div>
<div class="c ce" style="left:768px;top:576px;width:86px;color:#217A27;">陰</div>
<div class="c ce" style="left:855px;top:576px;width:60px;color:#333;">1</div>
<div class="c r" style="left:916px;top:576px;width:87px;color:#333;">-2</div>
<div class="c r" style="left:1092px;top:576px;width:87px;color:#333;">3922.808</div>
<div class="ab" style="left:1179px;top:576px;width:89px;height:32px;background:#FFC7CE"></div>
<div class="c r" style="left:1180px;top:576px;width:87px;color:#AE2230;">1.002524</div>
<div class="c r" style="left:1268px;top:576px;width:87px;color:#333;">3873.861</div>
<div class="ab" style="left:1355px;top:576px;width:89px;height:32px;background:#FFC7CE"></div>
<div class="c r" style="left:1356px;top:576px;width:87px;color:#AE2230;">1.015191</div>
<div class="c r" style="left:1444px;top:576px;width:87px;color:#333;">3902.66</div>
<div class="ab" style="left:1531px;top:576px;width:89px;height:32px;background:#FFC7CE"></div>
<div class="c r" style="left:1532px;top:576px;width:87px;color:#AE2230;">1.0077</div>
<svg style="left:1268px;top:576px" width="7" height="7"><path d="M0 0 H7 L0 7Z" fill="#1E7B3C"/></svg>
<svg style="left:1444px;top:576px" width="7" height="7"><path d="M0 0 H7 L0 7Z" fill="#1E7B3C"/></svg>
<div class="c r" style="left:0px;top:608px;width:119px;color:#333;">2021<span class="sl">/</span>6<span class="sl">/</span>8</div>
<div class="c r" style="left:120px;top:608px;width:87px;color:#333;">3,925.86</div>
<div class="c r" style="left:208px;top:608px;width:87px;color:#333;">3,937.30</div>
<div class="c r" style="left:296px;top:608px;width:87px;color:#333;">3,924.46</div>
<div class="c r" style="left:384px;top:608px;width:87px;color:#333;">3,934.41</div>
<div class="ab" style="left:471px;top:608px;width:89px;height:32px;background:#FCF6F9"></div>
<div class="c r" style="left:472px;top:608px;width:87px;color:#333;">10.33</div>
<div class="ab" style="left:559px;top:608px;width:89px;height:32px;background:#FCF6F9"></div>
<div class="c r" style="left:560px;top:608px;width:87px;color:#333;">0.3</div>
<div class="c r" style="left:648px;top:608px;width:119px;color:#333;">125,441,300</div>
<div class="ab" style="left:767px;top:608px;width:88px;height:32px;background:#FFC7CE"></div>
<div class="c ce" style="left:768px;top:608px;width:86px;color:#AE2230;">陽</div>
<div class="c ce" style="left:855px;top:608px;width:60px;color:#333;">1</div>
<div class="c r" style="left:916px;top:608px;width:87px;color:#333;">10</div>
<div class="c r" style="left:1092px;top:608px;width:87px;color:#333;">3915.82</div>
<div class="ab" style="left:1179px;top:608px;width:89px;height:32px;background:#FFC7CE"></div>
<div class="c r" style="left:1180px;top:608px;width:87px;color:#AE2230;">1.004747</div>
<div class="c r" style="left:1268px;top:608px;width:87px;color:#333;">3872.36</div>
<div class="ab" style="left:1355px;top:608px;width:89px;height:32px;background:#FFC7CE"></div>
<div class="c r" style="left:1356px;top:608px;width:87px;color:#AE2230;">1.016024</div>
<div class="c r" style="left:1444px;top:608px;width:87px;color:#333;">3901.007</div>
<div class="ab" style="left:1531px;top:608px;width:89px;height:32px;background:#FFC7CE"></div>
<div class="c r" style="left:1532px;top:608px;width:87px;color:#AE2230;">1.008563</div>
<svg style="left:1268px;top:608px" width="7" height="7"><path d="M0 0 H7 L0 7Z" fill="#1E7B3C"/></svg>
<svg style="left:1444px;top:608px" width="7" height="7"><path d="M0 0 H7 L0 7Z" fill="#1E7B3C"/></svg>
<div class="c r" style="left:0px;top:640px;width:119px;color:#333;">2021<span class="sl">/</span>6<span class="sl">/</span>7</div>
<div class="c r" style="left:120px;top:640px;width:87px;color:#333;">3,926.04</div>
<div class="c r" style="left:208px;top:640px;width:87px;color:#333;">3,929.14</div>
<div class="c r" style="left:296px;top:640px;width:87px;color:#333;">3,921.04</div>
<div class="c r" style="left:384px;top:640px;width:87px;color:#333;">3,924.08</div>
<div class="ab" style="left:471px;top:640px;width:89px;height:32px;background:#FCF3F6"></div>
<div class="c r" style="left:472px;top:640px;width:87px;color:#333;">12.75</div>
<div class="ab" style="left:559px;top:640px;width:89px;height:32px;background:#FCF6F9"></div>
<div class="c r" style="left:560px;top:640px;width:87px;color:#333;">0.3</div>
<div class="c r" style="left:648px;top:640px;width:119px;color:#333;">122,969,700</div>
<div class="ab" style="left:767px;top:640px;width:88px;height:32px;background:#C6EFCE"></div>
<div class="c ce" style="left:768px;top:640px;width:86px;color:#217A27;">陰</div>
<div class="c ce" style="left:855px;top:640px;width:60px;color:#333;">1</div>
<div class="c r" style="left:916px;top:640px;width:87px;color:#333;">13</div>
<div class="c r" style="left:1092px;top:640px;width:87px;color:#333;">3908.29</div>
<div class="ab" style="left:1179px;top:640px;width:89px;height:32px;background:#FFC7CE"></div>
<div class="c r" style="left:1180px;top:640px;width:87px;color:#AE2230;">1.00404</div>
<div class="c r" style="left:1268px;top:640px;width:87px;color:#333;">3871.226</div>
<div class="ab" style="left:1355px;top:640px;width:89px;height:32px;background:#FFC7CE"></div>
<div class="c r" style="left:1356px;top:640px;width:87px;color:#AE2230;">1.013653</div>
<div class="c r" style="left:1444px;top:640px;width:87px;color:#333;">3898.984</div>
<div class="ab" style="left:1531px;top:640px;width:89px;height:32px;background:#FFC7CE"></div>
<div class="c r" style="left:1532px;top:640px;width:87px;color:#AE2230;">1.006437</div>
<svg style="left:1268px;top:640px" width="7" height="7"><path d="M0 0 H7 L0 7Z" fill="#1E7B3C"/></svg>
<svg style="left:1444px;top:640px" width="7" height="7"><path d="M0 0 H7 L0 7Z" fill="#1E7B3C"/></svg>
<div class="c r" style="left:0px;top:672px;width:119px;color:#333;">2021<span class="sl">/</span>6<span class="sl">/</span>4</div>
<div class="c r" style="left:120px;top:672px;width:87px;color:#333;">3,908.44</div>
<div class="c r" style="left:208px;top:672px;width:87px;color:#333;">3,916.50</div>
<div class="c r" style="left:296px;top:672px;width:87px;color:#333;">3,903.19</div>
<div class="c r" style="left:384px;top:672px;width:87px;color:#333;">3,911.33</div>
<div class="ab" style="left:471px;top:672px;width:89px;height:32px;background:#F9FBFC"></div>
<div class="c r" style="left:472px;top:672px;width:87px;color:#333;">0.18</div>
<div class="ab" style="left:559px;top:672px;width:89px;height:32px;background:#F8FAFC"></div>
<div class="c r" style="left:560px;top:672px;width:87px;color:#333;">0</div>
<div class="c r" style="left:648px;top:672px;width:119px;color:#333;">64,312,800</div>
<div class="ab" style="left:767px;top:672px;width:88px;height:32px;background:#FFC7CE"></div>
<div class="c ce" style="left:768px;top:672px;width:86px;color:#AE2230;">陽</div>
<div class="c ce" style="left:855px;top:672px;width:60px;color:#333;">2</div>
<div class="c r" style="left:916px;top:672px;width:87px;color:#333;">14</div>
<div class="c r" style="left:1092px;top:672px;width:87px;color:#333;">3901.628</div>
<div class="ab" style="left:1179px;top:672px;width:89px;height:32px;background:#FFC7CE"></div>
<div class="c r" style="left:1180px;top:672px;width:87px;color:#AE2230;">1.002487</div>
<div class="c r" style="left:1268px;top:672px;width:87px;color:#333;">3870.757</div>
<div class="ab" style="left:1355px;top:672px;width:89px;height:32px;background:#FFC7CE"></div>
<div class="c r" style="left:1356px;top:672px;width:87px;color:#AE2230;">1.010482</div>
<div class="c r" style="left:1444px;top:672px;width:87px;color:#333;">3896.854</div>
<div class="ab" style="left:1531px;top:672px;width:89px;height:32px;background:#FFC7CE"></div>
<div class="c r" style="left:1532px;top:672px;width:87px;color:#AE2230;">1.003715</div>
<svg style="left:1268px;top:672px" width="7" height="7"><path d="M0 0 H7 L0 7Z" fill="#1E7B3C"/></svg>
<svg style="left:1444px;top:672px" width="7" height="7"><path d="M0 0 H7 L0 7Z" fill="#1E7B3C"/></svg>
<div class="ab" style="left:767px;top:32px;width:941px;height:32px;background:rgba(0,0,0,0.224)"></div>
<div class="ab" style="left:767px;top:64px;width:853px;height:32px;background:rgba(0,0,0,0.224)"></div>
</div>
<div class="ab" style="left:803px;top:318px;width:943px;height:67px;border:2px solid #217346"></div>
<div class="ab" style="left:805px;top:320px;width:939px;height:63px;border:1px solid #fff"></div>
<div class="ab" style="left:1741px;top:380px;width:7px;height:7px;background:#217346;border:1px solid #fff"></div>
<div class="ab" style="left:1748px;top:387px;width:28px;height:28px;background:#fff;border:1px solid #217346"></div>
<svg style="left:1751px;top:390px" width="22" height="22"><path d="M4 2 L7 2 L3 10 L6 10 L2 19" fill="#EBC57D" stroke="#EBC57D" stroke-width="1"/><path d="M7 3 H19 V18 H6" fill="none" stroke="#666" stroke-width="1.2"/><rect x="9" y="6" width="5" height="3" fill="#D9603B"/><rect x="9" y="10" width="9" height="3" fill="#3B7FC4"/><rect x="9" y="14" width="7" height="2.5" fill="#6BAF92"/></svg>
<div class="ab" style="left:1894px;top:287px;width:1px;height:688px;background:#ABABAB"></div>
<div class="ab" style="left:1895px;top:258px;width:25px;height:717px;background:#E6E6E6"></div>
<div class="ab" style="left:1898px;top:279px;width:19px;height:696px;background:#DADADA"></div>
<div class="ab" style="left:1898px;top:260px;width:19px;height:19px;background:#fff;border:1px solid #C6C6C6"></div>
<svg style="left:1902px;top:266px" width="11" height="6"><path d="M0 6 L5.5 0 L11 6Z" fill="#777"/></svg>
<div class="ab" style="left:1898px;top:280px;width:19px;height:41px;background:#fff;border:1px solid #C6C6C6"></div>
<div class="ab" style="left:1898px;top:957px;width:19px;height:19px;background:#fff;border:1px solid #C6C6C6"></div>
<svg style="left:1902px;top:965px" width="10" height="5"><path d="M0 0 L5 5 L10 0Z" fill="#777"/></svg>
<div class="ab" style="left:0;top:975px;width:1920px;height:28px;background:#E6E6E6"></div>
<div class="ab" style="left:0;top:975px;width:1895px;height:1px;background:#ABABAB"></div>
<div class="ab" style="left:1898px;top:957px;width:19px;height:19px;background:#fff;border:1px solid #C6C6C6"></div>
<svg style="left:1902px;top:965px" width="10" height="5"><path d="M0 0 L5 5 L10 0Z" fill="#777"/></svg>
<svg style="left:26px;top:983px" width="8" height="12"><path d="M7 0 V12 L0 6Z" fill="#1E6B3F"/></svg>
<svg style="left:54px;top:983px" width="8" height="12"><path d="M0 0 V12 L7 6Z" fill="#1E6B3F"/></svg>
<div class="t" style="left:78px;top:980px;color:#1E6B3F;font-size:16px;font-weight:bold">...</div>
<div class="ab" style="left:100px;top:979px;width:1px;height:20px;background:#B0B0B0"></div>
<div class="t" id="f45" style="left:113px;top:978px;color:#444;font-size:16px;transform:scaleX(0.9297);transform-origin:0 0;">トレンド統計関連</div>
<div class="ab" style="left:244px;top:979px;width:1px;height:20px;background:#B0B0B0"></div>
<div class="ab" style="left:247px;top:978px;width:89px;height:21px;background:#FF0000"></div>
<div class="t" id="f46" style="left:258px;top:978px;color:#fff;font-size:16px;transform:scaleX(1.1243);transform-origin:0 0;">日経225</div>
<div class="ab" style="left:341px;top:978px;width:112px;height:21px;background:#FF0000"></div>
<div class="t" id="f47" style="left:352px;top:978px;color:#fff;font-size:16px;transform:scaleX(0.9479);transform-origin:0 0;">マザーズ指標</div>
<div class="ab" style="left:518px;top:978px;width:77px;height:21px;background:#FF0000"></div>
<div class="t" id="f48" style="left:530px;top:978px;color:#fff;font-size:16px;transform:scaleX(1.1107);transform-origin:0 0;">TOPIX</div>
<div class="ab" style="left:600px;top:978px;width:160px;height:21px;background:#FFC000"></div>
<div class="t" id="f49" style="left:609px;top:978px;color:#222;font-size:16px;transform:scaleX(1.0941);transform-origin:0 0;">個別&nbsp; 騰落率&nbsp; 推移</div>
<div class="ab" style="left:765px;top:978px;width:87px;height:21px;background:#FFC000"></div>
<div class="t" id="f50" style="left:775px;top:978px;color:#222;font-size:16px;transform:scaleX(1.0625);transform-origin:0 0;">東証一部</div>
<div class="ab" style="left:857px;top:978px;width:87px;height:21px;background:#FFC000"></div>
<div class="t" id="f51" style="left:867px;top:978px;color:#222;font-size:16px;transform:scaleX(1.0469);transform-origin:0 0;">東証二部</div>
<div class="ab" style="left:949px;top:978px;width:42px;height:21px;background:#FFC000"></div>
<div class="t" id="f52" style="left:958px;top:978px;color:#222;font-size:16px;transform:scaleX(1.1245);transform-origin:0 0;">JQ</div>
<div class="ab" style="left:996px;top:978px;width:78px;height:21px;background:#FFC000"></div>
<div class="t" id="f53" style="left:1007px;top:978px;color:#222;font-size:16px;transform:scaleX(0.8750);transform-origin:0 0;">マザーズ</div>
<div class="ab" style="left:339px;top:980px;width:1px;height:18px;background:#B0B0B0"></div>
<div class="ab" style="left:598px;top:980px;width:1px;height:18px;background:#B0B0B0"></div>
<div class="ab" style="left:762px;top:980px;width:1px;height:18px;background:#B0B0B0"></div>
<div class="ab" style="left:854px;top:980px;width:1px;height:18px;background:#B0B0B0"></div>
<div class="ab" style="left:946px;top:980px;width:1px;height:18px;background:#B0B0B0"></div>
<div class="ab" style="left:993px;top:980px;width:1px;height:18px;background:#B0B0B0"></div>
<div class="ab" style="left:1077px;top:980px;width:1px;height:18px;background:#B0B0B0"></div>
<div class="ab" style="left:456px;top:975px;width:60px;height:25px;background:linear-gradient(#fff 15%,#F4A9B0);border-left:1px solid #C6C6C6;border-right:1px solid #C6C6C6"></div>
<div class="ab" style="left:456px;top:998px;width:60px;height:2px;background:#217346"></div>
<div class="t" style="left:468px;top:978px;color:#217346;font-size:17px;">JAQ</div>
<div class="t" style="left:1085px;top:980px;color:#1E6B3F;font-size:16px;font-weight:bold">...</div>
<svg style="left:1111px;top:979px" width="21" height="21"><circle cx="10.5" cy="10.5" r="9" fill="none" stroke="#777" stroke-width="1.3"/><path d="M10.5 5 V16 M5 10.5 H16" stroke="#777" stroke-width="1.3"/></svg>
<div class="ab" style="left:1148px;top:982px;width:3px;height:3px;background:#B0B0B0"></div>
<div class="ab" style="left:1148px;top:988px;width:3px;height:3px;background:#B0B0B0"></div>
<div class="ab" style="left:1148px;top:994px;width:3px;height:3px;background:#B0B0B0"></div>
<div class="ab" style="left:1167px;top:980px;width:728px;height:19px;background:#fff;border:1px solid #C6C6C6"></div>
<div class="ab" style="left:1185px;top:980px;width:1px;height:18px;background:#C6C6C6"></div>
<svg style="left:1173px;top:985px" width="6" height="9"><path d="M6 0 V9 L0 4.5Z" fill="#777"/></svg>
<div class="ab" style="left:1840px;top:980px;width:37px;height:19px;background:#DADADA;border-left:1px solid #B0B0B0"></div>
<div class="ab" style="left:1876px;top:980px;width:19px;height:19px;background:#fff;border:1px solid #B8B8B8"></div>
<svg style="left:1884px;top:985px" width="6" height="9"><path d="M0 0 V9 L5 4.5Z" fill="#777"/></svg>
<div class="ab" style="left:0;top:1003px;width:1920px;height:27px;background:#F3F3F3;border-top:1px solid #DADADA"></div>
<div class="t" id="f54" style="left:9px;top:1010px;color:#333;font-size:15px;transform:scaleX(1.0000);transform-origin:0 0;">準備完了</div>
<div class="t" id="f55" style="left:1124px;top:1010px;color:#333;font-size:15px;transform:scaleX(1.0892);transform-origin:0 0;">平均: 1480.6862</div>
<div class="t" id="f56" style="left:1261px;top:1010px;color:#333;font-size:15px;transform:scaleX(0.9302);transform-origin:0 0;">データの個数: 22</div>
<div class="t" id="f57" style="left:1387px;top:1010px;color:#333;font-size:15px;transform:scaleX(1.0800);transform-origin:0 0;">合計: 23690.9792</div>
<div class="ab" style="left:1538px;top:1004px;width:49px;height:26px;background:#D2D2D2"></div>
<svg style="left:1554px;top:1009px" width="18" height="16"><g fill="none" stroke="#777" stroke-width="1"><rect x="0.5" y="0.5" width="17" height="15"/><path d="M6.5 0.5 V15.5 M11.5 0.5 V15.5 M0.5 5.5 H17.5 M0.5 10.5 H17.5"/></g></svg>
<svg style="left:1603px;top:1009px" width="18" height="16"><g fill="none" stroke="#777" stroke-width="1"><rect x="0.5" y="0.5" width="17" height="15"/><rect x="3.5" y="2.5" width="11" height="11"/><path d="M5.5 5.5 H12.5 M5.5 8 H12.5 M5.5 10.5 H12.5"/></g></svg>
<svg style="left:1653px;top:1009px" width="18" height="16"><g fill="none" stroke="#777" stroke-width="1"><rect x="0.5" y="0.5" width="17" height="15"/><path d="M0.5 9.5 H11.5 V0.5 M6 0.5 V9.5"/></g></svg>
<div class="ab" style="left:1694px;top:1017px;width:10px;height:1px;background:#555"></div>
<div class="ab" style="left:1711px;top:1017px;width:126px;height:1px;background:#9A9A9A"></div>
<div class="ab" style="left:1771px;top:1010px;width:6px;height:14px;background:#6B6B6B"></div>
<svg style="left:1842px;top:1012px" width="10" height="10"><path d="M5 0 V10 M0 5 H10" stroke="#555" stroke-width="1.2"/></svg>
<div class="t" id="f58" style="left:1868px;top:1010px;color:#333;font-size:15px;transform:scaleX(1.0945);transform-origin:0 0;">100%</div>
<div class="ab" style="left:0;top:1030px;width:1920px;height:50px;background:linear-gradient(90deg,#E8DCDA 0%,#E5DADA 35%,#DFDBDE 55%,#DEDDE0 100%)"></div>
<div class="ab" style="left:1914px;top:1030px;width:1px;height:50px;background:#A9A9AC"></div>
<svg style="left:20px;top:1045px" width="21" height="21"><path d="M0 2.5 L9 1.2 V9.6 H0Z M10.2 1 L21 0 V9.6 H10.2Z M0 10.8 H9 V19.3 L0 18Z M10.2 10.8 H21 V21 L10.2 19.5Z" fill="#000"/></svg>
<div class="ab" style="left:61px;top:1031px;width:429px;height:49px;background:#fff;border:1px solid #C9C2C2"></div>
<svg style="left:75px;top:1045px" width="22" height="22"><circle cx="13" cy="8.5" r="6.5" fill="none" stroke="#111" stroke-width="1.6"/><path d="M8.5 13 L1.5 20.5" stroke="#111" stroke-width="1.8"/></svg>
<div class="t" id="f59" style="left:110px;top:1047px;color:#333;font-size:17px;transform:scaleX(0.9281);transform-origin:0 0;">ここに入力して検索</div>
<svg style="left:510px;top:1045px" width="21" height="21"><circle cx="10.5" cy="10.5" r="8.5" fill="none" stroke="#111" stroke-width="2.4"/></svg>
<svg style="left:569px;top:1045px" width="22" height="20"><g fill="none" stroke="#111" stroke-width="1.6"><path d="M1 1 H15 M1 19 H15 M1 1 V19" stroke-width="0"/><rect x="2" y="4" width="12" height="12"/><path d="M0 1 H16 M0 19 H16 M20 1 V5 M20 8 V12 M20 15 V19"/></g></svg>
<svg style="left:628px;top:1042px" width="30" height="26"><path d="M1 2 H11 L13 5 H29 V25 H1Z" fill="#F4C542"/><rect x="1" y="7" width="28" height="18" fill="#FFD966"/><path d="M8 25 V16 H22 V25 H18 V19 H12 V25Z" fill="#2B7CD3"/></svg>
<div class="ab" style="left:619px;top:1077px;width:51px;height:3px;background:#0078D7"></div>
<svg style="left:690px;top:1040px" width="30" height="30"><path d="M9 8 V4 a6 5 0 0 1 12 0 V8" fill="none" stroke="#222" stroke-width="2.5"/><rect x="1" y="8" width="28" height="22" rx="2" fill="#2B2B2B"/><rect x="9" y="13" width="5.5" height="5.5" fill="#F25022"/><rect x="15.5" y="13" width="5.5" height="5.5" fill="#7FBA00"/><rect x="9" y="19.5" width="5.5" height="5.5" fill="#00A4EF"/><rect x="15.5" y="19.5" width="5.5" height="5.5" fill="#FFB900"/></svg>
<svg style="left:752px;top:1040px" width="32" height="30"><path d="M1 12 L16 1 L31 12 V29 H1Z" fill="#0A64B8"/><path d="M1 12 L16 22 L31 12 V29 H1Z" fill="#2CA6F0"/><path d="M1 12 L16 22 L31 12" fill="none" stroke="#fff" stroke-width="1.5"/></svg>
<div class="ab" style="left:815px;top:1040px;width:30px;height:30px;background:#F3552E"></div>
<svg style="left:815px;top:1040px" width="30" height="30"><circle cx="15" cy="15" r="11.5" fill="#fff"/><circle cx="15" cy="13" r="5" fill="none" stroke="#F3552E" stroke-width="1.3"/><path d="M10 12 C10 7 20 7 20 12" fill="#F3552E"/><path d="M7.5 24 C9 19 21 19 22.5 24" fill="none" stroke="#F3552E" stroke-width="1.3"/></svg>
<div class="ab" style="left:877px;top:1041px;width:30px;height:28px;background:linear-gradient(#4D8BF0,#1B3FB8);border-radius:4px;color:#fff;font-size:19px;text-align:center;line-height:22px">@</div>
<div class="t" style="left:882px;top:1061px;color:#fff;font-size:7px;">menu</div>
<svg style="left:939px;top:1040px" width="30" height="30"><defs><linearGradient id="eg" x1="0" y1="0.2" x2="1" y2="0.7"><stop offset="0" stop-color="#38C0F2"/><stop offset="0.5" stop-color="#2CC2C0"/><stop offset="1" stop-color="#55D64C"/></linearGradient></defs><path d="M15 0.3 C23 0.3 29.5 6 29.5 13.5 C29.5 18 27 20.5 24 20.5 L17 20 C13 20 11 16 12 13 C13 10 16 9.5 18 11.5 L17 16 C19 18 24 18 28 17 C29 21 26 27 21 29 C13 31 3 28 0.8 18 C0 9 6 0.3 15 0.3Z" fill="url(#eg)"/><path d="M0.6 15 C0.8 7 7 3.5 12.5 4.5 C17 5.5 19.5 8.5 19 11.5 C16 9 11 10 9.5 15.5 C8.5 21 12 27 16.5 29.8 C7 30 0.4 23 0.6 15Z" fill="#0E84DA"/><path d="M9.5 16 C9.3 22 13 28 16.5 29.8 C22 29.8 26 27 28.2 21.5 C25 23 21 23.5 18 22.5 C14 21 12 18 12 15 C11 14.5 10 15 9.5 16Z" fill="#0F4C9A"/><path d="M12 14.5 C12 11 15.5 9.8 17.8 11.5 C19 12.5 18.5 14.5 17.5 15.5 C18.5 17.5 22 18.5 25.5 18.3 L28.6 17.6 C27 20.5 24 21.2 21 21.2 C16 21.2 12 18.5 12 14.5Z" fill="#E1DCDE"/></svg>
<div class="ab" style="left:929px;top:1077px;width:51px;height:3px;background:#0078D7"></div>
<div class="ab" style="left:986px;top:1030px;width:58px;height:50px;background:#EFE9E9"></div>
<svg style="left:1000px;top:1040px" width="30" height="28"><rect x="8" y="1" width="21" height="26" rx="1.5" fill="#21A366"/><rect x="8" y="9.5" width="21" height="9" fill="#107C41"/><rect x="18" y="1" width="11" height="8.5" fill="#33C481"/><rect x="18" y="18.5" width="11" height="8.5" fill="#185C37"/><rect x="0" y="6" width="16" height="16" rx="1.5" fill="#107C41"/><path d="M4 10 L12 18 M12 10 L4 18" stroke="#fff" stroke-width="2.2"/></svg>
<div class="ab" style="left:986px;top:1077px;width:58px;height:3px;background:#0078D7"></div>
<div class="ab" style="left:1043px;top:1030px;width:1px;height:50px;background:#D0C8C8"></div>
<svg style="left:1383px;top:1043px" width="30" height="24"><circle cx="11" cy="9" r="6" fill="#F6C343"/><path d="M6 22 a6 6 0 0 1 2 -11 a8 8 0 0 1 14 1 a5 5 0 0 1 1 10Z" fill="#D6EAF8" stroke="#AFCFE6" stroke-width="1"/></svg>
<div class="t" id="f60" style="left:1423px;top:1047px;color:#222;font-size:17px;transform:scaleX(0.8772);transform-origin:0 0;">26°C&nbsp; くもりのち晴れ</div>
<svg style="left:1591px;top:1050px" width="15" height="9"><path d="M1 8 L7.5 1 L14 8" fill="none" stroke="#222" stroke-width="1.5"/></svg>
<svg style="left:1618px;top:1045px" width="22" height="20"><path d="M3 15 a5 5 0 0 1 2 -9 a7 7 0 0 1 12 1 a4 4 0 0 1 1 8Z" fill="none" stroke="#333" stroke-width="1.5"/><circle cx="15" cy="15" r="4.5" fill="#fff" stroke="#1B8CE0" stroke-width="1.5"/></svg>
<svg style="left:1648px;top:1048px" width="22" height="14"><rect x="3" y="3" width="17" height="10" fill="none" stroke="#222" stroke-width="1.5"/><rect x="5" y="5" width="11" height="6" fill="#222"/><path d="M0 5 H3 M1.5 2 V8" stroke="#222" stroke-width="1.2"/></svg>
<svg style="left:1681px;top:1046px" width="20" height="18"><g fill="none" stroke="#333" stroke-width="1.4"><path d="M2 16 a14 14 0 0 1 14 -14 M5 16 a11 11 0 0 1 11 -11 M8 16 a8 8 0 0 1 8 -8 M11 16 a5 5 0 0 1 5 -5"/></g></svg>
<svg style="left:1707px;top:1046px" width="22" height="18"><path d="M1 6 H5 L10 1 V17 L5 12 H1Z" fill="none" stroke="#333" stroke-width="1.4"/><path d="M13 6 a4 4 0 0 1 0 6 M16 3 a8 8 0 0 1 0 12" fill="none" stroke="#333" stroke-width="1.3"/></svg>
<div class="t" style="left:1739px;top:1042px;color:#111;font-size:24px;">A</div>
<div class="t" id="f61" style="left:1790px;top:1035px;color:#222;font-size:15px;transform:scaleX(0.9588);transform-origin:0 0;">16:57</div>
<div class="t" id="f62" style="left:1770px;top:1059px;color:#222;font-size:15px;transform:scaleX(1.0256);transform-origin:0 0;">2021/07/03</div>
<svg style="left:1867px;top:1043px" width="30" height="30"><path d="M1 1 H21 V15 H9 L5 19 V15 H1Z" fill="#222"/><path d="M4 5 H18 M4 8 H18 M4 11 H14" stroke="#fff" stroke-width="1.2"/><circle cx="18" cy="18" r="8.5" fill="#D8D8D8" stroke="#666" stroke-width="1"/><text x="18" y="22.5" font-size="11" text-anchor="middle" fill="#111" font-family="Liberation Sans">1</text></svg>
</body></html>
